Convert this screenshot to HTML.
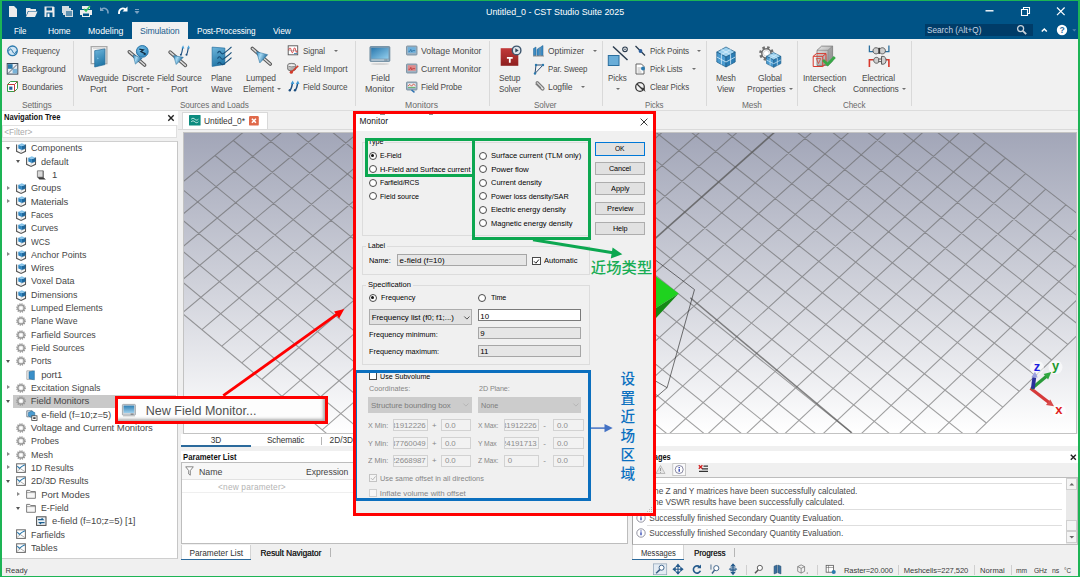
<!DOCTYPE html>
<html lang="en"><head><meta charset="utf-8"><title>Untitled_0 - CST Studio Suite 2025</title><style>
html,body{margin:0;padding:0}
body{width:1080px;height:577px;position:relative;overflow:hidden;background:#f0f0f0;font-family:"Liberation Sans","Noto Sans CJK SC",sans-serif}
.a{position:absolute;display:block}
svg.a{overflow:visible}
svg.cl{overflow:hidden}
.t{position:absolute;white-space:nowrap;line-height:1.2}
.cj{font-family:"Liberation Sans","Noto Sans CJK SC",sans-serif}
.dd{position:absolute;width:0;height:0;border-left:2.200px solid transparent;border-right:2.200px solid transparent;border-top:2.600px solid #6f6f6f}
.ex{position:absolute;width:0;height:0;border-left:2.600px solid transparent;border-right:2.600px solid transparent;border-top:3px solid #555}
.co{position:absolute;width:0;height:0;border-top:2.700px solid transparent;border-bottom:2.700px solid transparent;border-left:3.100px solid #8a8a8a}
.rd{position:absolute;width:8.200px;height:8.200px;border-radius:50%;border:.900px solid #4a4a4a;background:#fff;box-sizing:border-box}
.rd i{position:absolute;left:1.600px;top:1.600px;width:3px;height:3px;border-radius:50%;background:#111}
.di{border:1px solid #d2d2d2;background:#f2f2f2;box-sizing:border-box;overflow:hidden}
</style></head><body>
<div class="a" style="left:0px;top:0px;width:1080px;height:577px;background:#1db455;"></div>
<div class="a" style="left:1.6px;top:1px;width:1076.7px;height:574.7px;background:#f0f0f0;"></div>
<div class="a" style="left:1.6px;top:1px;width:1076.7px;height:38px;background:#005386;"></div>
<svg class="a" style="left:0px;top:0px" width="150" height="22" viewBox="0 0 150 22">
<g fill="#ececec" stroke="none">
<path d="M9 6h5l3 3v8H9z"/>
<path d="M26 8h4l1 1h5v2h-8l-2 5z" /><path d="M28.5 11.5h9l-2.5 5.5h-9z"/>
<path d="M44.5 6.5h9l1 1v9.5h-10z"/><rect x="46.5" y="7.5" width="5.5" height="3" fill="#005386"/><rect x="46.5" y="12.5" width="6" height="4.5" fill="#005386"/><rect x="47.5" y="13.5" width="2" height="3.5" fill="#fff"/>
<path d="M62 6h7v2h2v2h2v7h-8v-2h-2v-2h-1z" opacity=".9"/><rect x="66" y="11" width="6" height="5" fill="#005386" opacity=".55"/>
<path d="M82 6h8v3h-8z"/><path d="M80 10h12v5h-2v2h-8v-2h-2z"/><rect x="83" y="13.5" width="6" height="2.5" fill="#005386"/>
</g>
<path d="M84 9l2 2 4-5" stroke="#35c35a" stroke-width="1.6" fill="none"/>
<path d="M101.5 9.5c3-2.5 7-.5 6.5 4" stroke="#7fa5c4" stroke-width="1.5" fill="none"/><path d="M100 7v4h4z" fill="#7fa5c4"/>
<path d="M125.5 9.5c-3-2.5-7-.5-6.5 4.5" stroke="#fff" stroke-width="1.8" fill="none"/><path d="M127.5 6.5v5h-5z" fill="#fff"/>
<path d="M135 9.5h4M135.2 11.5l1.8 2 1.8-2z" stroke="#7fa5c4" stroke-width="1" fill="#7fa5c4"/>
</svg>
<span class="t" style="left:486.30px;top:6.73px;font-size:9.3px;color:#fff;transform:scaleX(0.9558);transform-origin:0 50%;">Untitled_0 - CST Studio Suite 2025</span>
<svg class="a" style="left:980px;top:2px" width="100" height="20" viewBox="0 0 100 20"><path d="M5.5 8.8h8" stroke="#fff" stroke-width="1.4"/>
<path d="M41.5 7.5h6v6h-6z M43.5 7.5v-2h6v6h-2" stroke="#fff" stroke-width="1.1" fill="none"/>
<path d="M77 5.5l7.6 7.6M84.6 5.5l-7.6 7.6" stroke="#fff" stroke-width="1.2"/></svg>
<span class="t" style="left:13.80px;top:25.15px;font-size:9.6px;color:#fff;transform:scaleX(0.8207);transform-origin:0 50%;letter-spacing:-0.12px;">File</span>
<span class="t" style="left:47.50px;top:25.15px;font-size:9.6px;color:#fff;transform:scaleX(0.8911);transform-origin:0 50%;letter-spacing:-0.12px;">Home</span>
<span class="t" style="left:87.50px;top:25.15px;font-size:9.6px;color:#fff;transform:scaleX(0.9112);transform-origin:0 50%;">Modeling</span>
<span class="t" style="left:197.00px;top:25.15px;font-size:9.6px;color:#fff;transform:scaleX(0.8575);transform-origin:0 50%;letter-spacing:-0.12px;">Post-Processing</span>
<span class="t" style="left:273.00px;top:25.15px;font-size:9.6px;color:#fff;transform:scaleX(0.8779);transform-origin:0 50%;letter-spacing:-0.12px;">View</span>
<div class="a" style="left:131.8px;top:22px;width:56.4px;height:17.5px;background:#f1f1f1;"></div>
<span class="t" style="left:140.00px;top:25.15px;font-size:9.6px;color:#1e5f8f;transform:scaleX(0.9030);transform-origin:0 50%;letter-spacing:-0.12px;">Simulation</span>
<div class="a" style="left:925.3px;top:24px;width:108px;height:11.8px;background:#003c68;"></div>
<span class="t" style="left:926.80px;top:25.34px;font-size:8.6px;color:#c6d6e4;transform:scaleX(0.9525);transform-origin:0 50%;">Search (Alt+Q)</span>
<svg class="a" style="left:1014px;top:23px" width="66" height="14" viewBox="0 0 66 14"><circle cx="6.6" cy="5.6" r="3" stroke="#c9d3db" stroke-width="1.3" fill="none"/><path d="M8.8 7.8l3.4 3.4" stroke="#c9d3db" stroke-width="1.8"/>
<path d="M27.8 8.6l2.5-2.6 2.5 2.6" stroke="#fff" stroke-width="1.5" fill="none"/>
<circle cx="48" cy="7" r="5.2" fill="#fff"/><text x="48" y="10.2" font-size="8.5" font-weight="bold" text-anchor="middle" fill="#2a6da3" font-family="Liberation Sans, sans-serif">?</text>
<path d="M58.3 6.3h4l-2 2.2z" fill="#4f86ad"/></svg>
<div class="a" style="left:1.6px;top:39px;width:1076.7px;height:71px;background:#f1f1f1;"></div>
<div class="a" style="left:1.6px;top:110px;width:1076.7px;height:1px;background:#dcdcdc;"></div>
<div class="a" style="left:73px;top:41px;width:1px;height:65px;background:#d9d9d9;"></div>
<div class="a" style="left:355.2px;top:41px;width:1px;height:65px;background:#d9d9d9;"></div>
<div class="a" style="left:489.2px;top:41px;width:1px;height:65px;background:#d9d9d9;"></div>
<div class="a" style="left:601.8px;top:41px;width:1px;height:65px;background:#d9d9d9;"></div>
<div class="a" style="left:705.8px;top:41px;width:1px;height:65px;background:#d9d9d9;"></div>
<div class="a" style="left:797.2px;top:41px;width:1px;height:65px;background:#d9d9d9;"></div>
<div class="a" style="left:911.3px;top:41px;width:1px;height:65px;background:#d9d9d9;"></div>
<span class="t" style="left:22.00px;top:99.63px;font-size:9.3px;color:#6a6a6a;transform:scaleX(0.9095);transform-origin:0 50%;letter-spacing:-0.12px;">Settings</span>
<span class="t" style="left:179.50px;top:99.63px;font-size:9.3px;color:#6a6a6a;transform:scaleX(0.8795);transform-origin:0 50%;letter-spacing:-0.12px;">Sources and Loads</span>
<span class="t" style="left:405.30px;top:99.63px;font-size:9.3px;color:#6a6a6a;transform:scaleX(0.9254);transform-origin:0 50%;">Monitors</span>
<span class="t" style="left:533.75px;top:99.63px;font-size:9.3px;color:#6a6a6a;transform:scaleX(0.8734);transform-origin:0 50%;letter-spacing:-0.12px;">Solver</span>
<span class="t" style="left:644.55px;top:99.63px;font-size:9.3px;color:#6a6a6a;transform:scaleX(0.8510);transform-origin:0 50%;letter-spacing:-0.12px;">Picks</span>
<span class="t" style="left:741.80px;top:99.63px;font-size:9.3px;color:#6a6a6a;transform:scaleX(0.8936);transform-origin:0 50%;letter-spacing:-0.12px;">Mesh</span>
<span class="t" style="left:843.25px;top:99.63px;font-size:9.3px;color:#6a6a6a;transform:scaleX(0.8694);transform-origin:0 50%;letter-spacing:-0.12px;">Check</span>
<span class="t" style="left:21.80px;top:46.03px;font-size:9.3px;color:#4a4a4a;transform:scaleX(0.8795);transform-origin:0 50%;letter-spacing:-0.12px;">Frequency</span>
<span class="t" style="left:21.80px;top:64.03px;font-size:9.3px;color:#4a4a4a;transform:scaleX(0.9021);transform-origin:0 50%;letter-spacing:-0.12px;">Background</span>
<span class="t" style="left:21.80px;top:82.23px;font-size:9.3px;color:#4a4a4a;transform:scaleX(0.8875);transform-origin:0 50%;letter-spacing:-0.12px;">Boundaries</span>
<span class="t" style="left:302.50px;top:46.03px;font-size:9.3px;color:#4a4a4a;transform:scaleX(0.8712);transform-origin:0 50%;letter-spacing:-0.12px;">Signal</span>
<span class="t" style="left:302.50px;top:64.03px;font-size:9.3px;color:#4a4a4a;transform:scaleX(0.9063);transform-origin:0 50%;">Field Import</span>
<span class="t" style="left:302.50px;top:82.23px;font-size:9.3px;color:#4a4a4a;transform:scaleX(0.8744);transform-origin:0 50%;letter-spacing:-0.12px;">Field Source</span>
<span class="t" style="left:420.80px;top:46.03px;font-size:9.3px;color:#4a4a4a;transform:scaleX(0.9362);transform-origin:0 50%;">Voltage Monitor</span>
<span class="t" style="left:420.80px;top:64.03px;font-size:9.3px;color:#4a4a4a;transform:scaleX(0.9318);transform-origin:0 50%;">Current Monitor</span>
<span class="t" style="left:420.80px;top:82.23px;font-size:9.3px;color:#4a4a4a;transform:scaleX(0.8887);transform-origin:0 50%;letter-spacing:-0.12px;">Field Probe</span>
<span class="t" style="left:548.00px;top:46.03px;font-size:9.3px;color:#4a4a4a;transform:scaleX(0.9098);transform-origin:0 50%;">Optimizer</span>
<span class="t" style="left:548.00px;top:64.03px;font-size:9.3px;color:#4a4a4a;transform:scaleX(0.8497);transform-origin:0 50%;letter-spacing:-0.12px;">Par. Sweep</span>
<span class="t" style="left:548.00px;top:82.23px;font-size:9.3px;color:#4a4a4a;transform:scaleX(0.9181);transform-origin:0 50%;letter-spacing:-0.12px;">Logfile</span>
<span class="t" style="left:649.50px;top:46.03px;font-size:9.3px;color:#4a4a4a;transform:scaleX(0.8750);transform-origin:0 50%;letter-spacing:-0.12px;">Pick Points</span>
<span class="t" style="left:649.50px;top:64.03px;font-size:9.3px;color:#4a4a4a;transform:scaleX(0.8509);transform-origin:0 50%;letter-spacing:-0.12px;">Pick Lists</span>
<span class="t" style="left:649.50px;top:82.23px;font-size:9.3px;color:#4a4a4a;transform:scaleX(0.8554);transform-origin:0 50%;letter-spacing:-0.12px;">Clear Picks</span>
<span class="t" style="left:77.90px;top:72.73px;font-size:9.3px;color:#4a4a4a;transform:scaleX(0.9022);transform-origin:0 50%;letter-spacing:-0.12px;">Waveguide</span>
<span class="t" style="left:90.05px;top:83.83px;font-size:9.3px;color:#4a4a4a;letter-spacing:-0.186px;">Port</span>
<span class="t" style="left:121.75px;top:72.73px;font-size:9.3px;color:#4a4a4a;transform:scaleX(0.9528);transform-origin:0 50%;">Discrete</span>
<span class="t" style="left:126.75px;top:83.83px;font-size:9.3px;color:#4a4a4a;letter-spacing:-0.186px;">Port</span>
<div class="dd" style="left:146.4px;top:88.2px"></div>
<span class="t" style="left:156.90px;top:72.73px;font-size:9.3px;color:#4a4a4a;transform:scaleX(0.8803);transform-origin:0 50%;letter-spacing:-0.12px;">Field Source</span>
<span class="t" style="left:171.05px;top:83.83px;font-size:9.3px;color:#4a4a4a;letter-spacing:-0.186px;">Port</span>
<span class="t" style="left:211.05px;top:72.73px;font-size:9.3px;color:#4a4a4a;transform:scaleX(0.8796);transform-origin:0 50%;letter-spacing:-0.12px;">Plane</span>
<span class="t" style="left:210.55px;top:83.83px;font-size:9.3px;color:#4a4a4a;transform:scaleX(0.9177);transform-origin:0 50%;">Wave</span>
<span class="t" style="left:246.30px;top:72.73px;font-size:9.3px;color:#4a4a4a;transform:scaleX(0.9088);transform-origin:0 50%;letter-spacing:-0.12px;">Lumped</span>
<span class="t" style="left:242.80px;top:83.83px;font-size:9.3px;color:#4a4a4a;transform:scaleX(0.9086);transform-origin:0 50%;">Element</span>
<div class="dd" style="left:277.0px;top:88.2px"></div>
<span class="t" style="left:370.50px;top:72.73px;font-size:9.3px;color:#4a4a4a;transform:scaleX(0.9425);transform-origin:0 50%;">Field</span>
<span class="t" style="left:365.25px;top:83.83px;font-size:9.3px;color:#4a4a4a;transform:scaleX(0.9512);transform-origin:0 50%;">Monitor</span>
<span class="t" style="left:499.25px;top:72.73px;font-size:9.3px;color:#4a4a4a;transform:scaleX(0.9024);transform-origin:0 50%;letter-spacing:-0.12px;">Setup</span>
<span class="t" style="left:499.00px;top:83.83px;font-size:9.3px;color:#4a4a4a;transform:scaleX(0.8540);transform-origin:0 50%;letter-spacing:-0.12px;">Solver</span>
<span class="t" style="left:608.10px;top:72.73px;font-size:9.3px;color:#4a4a4a;transform:scaleX(0.8648);transform-origin:0 50%;letter-spacing:-0.12px;">Picks</span>
<div class="dd" style="left:615.5px;top:88.2px"></div>
<span class="t" style="left:716.00px;top:72.73px;font-size:9.3px;color:#4a4a4a;transform:scaleX(0.8936);transform-origin:0 50%;letter-spacing:-0.12px;">Mesh</span>
<span class="t" style="left:717.25px;top:83.83px;font-size:9.3px;color:#4a4a4a;transform:scaleX(0.8915);transform-origin:0 50%;letter-spacing:-0.12px;">View</span>
<span class="t" style="left:757.50px;top:72.73px;font-size:9.3px;color:#4a4a4a;transform:scaleX(0.9131);transform-origin:0 50%;letter-spacing:-0.12px;">Global</span>
<span class="t" style="left:747.25px;top:83.83px;font-size:9.3px;color:#4a4a4a;transform:scaleX(0.9083);transform-origin:0 50%;">Properties</span>
<div class="dd" style="left:789.0px;top:88.2px"></div>
<span class="t" style="left:802.65px;top:72.73px;font-size:9.3px;color:#4a4a4a;transform:scaleX(0.9006);transform-origin:0 50%;">Intersection</span>
<span class="t" style="left:813.05px;top:83.83px;font-size:9.3px;color:#4a4a4a;transform:scaleX(0.8694);transform-origin:0 50%;letter-spacing:-0.12px;">Check</span>
<span class="t" style="left:862.30px;top:72.73px;font-size:9.3px;color:#4a4a4a;transform:scaleX(0.9005);transform-origin:0 50%;letter-spacing:-0.12px;">Electrical</span>
<span class="t" style="left:852.90px;top:83.83px;font-size:9.3px;color:#4a4a4a;transform:scaleX(0.9069);transform-origin:0 50%;letter-spacing:-0.12px;">Connections</span>
<div class="dd" style="left:901.9px;top:88.2px"></div>
<div class="dd" style="left:333.5px;top:49.8px"></div>
<div class="dd" style="left:593px;top:49.8px"></div>
<div class="dd" style="left:581px;top:86px"></div>
<div class="dd" style="left:697.3px;top:49.8px"></div>
<div class="dd" style="left:691.5px;top:67.8px"></div>
<svg class="a" style="left:0px;top:0px" width="1080" height="111" viewBox="0 0 1080 111">
<defs>
<linearGradient id="gb" x1="0" y1="0" x2="1" y2="1"><stop offset="0" stop-color="#7cc0e6"/><stop offset="1" stop-color="#1f74a8"/></linearGradient>
<linearGradient id="gscr" x1="0" y1="0" x2="0" y2="1"><stop offset="0" stop-color="#2d7fb5"/><stop offset="1" stop-color="#9fd0ec"/></linearGradient>
<linearGradient id="gred" x1="0" y1="0" x2="0" y2="1"><stop offset="0" stop-color="#c23a3a"/><stop offset="1" stop-color="#8e1f1f"/></linearGradient>
<linearGradient id="ggr" x1="0" y1="0" x2="1" y2="1"><stop offset="0" stop-color="#e8e8e8"/><stop offset="1" stop-color="#8f8f8f"/></linearGradient>
<linearGradient id="gdoor" x1="0" y1="0" x2="0.300" y2="1"><stop offset="0" stop-color="#6fb6dc"/><stop offset="1" stop-color="#2378a8"/></linearGradient>
<linearGradient id="gcone" x1="0" y1="0" x2="1" y2=".4"><stop offset="0" stop-color="#2f86bd"/><stop offset=".42" stop-color="#a6daf4"/><stop offset="1" stop-color="#155f92"/></linearGradient>
<radialGradient id="gball" cx=".4" cy=".35" r=".7"><stop offset="0" stop-color="#7cc3ea"/><stop offset="1" stop-color="#2f86bd"/></radialGradient>
<linearGradient id="gscr2" x1="0" y1="0" x2="1" y2="1"><stop offset="0" stop-color="#2a78ad"/><stop offset="1" stop-color="#93cfee"/></linearGradient>
</defs>
<!-- Settings small -->
<circle cx="12.5" cy="50.8" r="4.8" fill="#cfe4f3" stroke="#2b79ad" stroke-width="1.3"/><path d="M8.5 51.3c1.5-3 2.5-3 4 0s2.5 3 4-.3" stroke="#1f6ea3" stroke-width="1" fill="none"/>
<rect x="7.2" y="63.5" width="10.6" height="10.6" fill="#e9eef3" stroke="#3b4a5a" stroke-width="1"/><rect x="8" y="64.2" width="4.6" height="4.6" fill="#2b79ad"/><rect x="12.6" y="68.8" width="4.6" height="4.6" fill="#7ab3d8"/><path d="M8 73.5l9-9" stroke="#3b4a5a" stroke-width=".8"/>
<path d="M7.5 84.5l3-3h7v7l-3 3h-7z" fill="#fff" stroke="#3a9a46" stroke-width="1"/><path d="M7.5 84.5h7v7M14.5 84.5l3-3" stroke="#c43a3a" stroke-width="1" fill="none"/><rect x="9.2" y="86.6" width="3.2" height="3.2" fill="#2b5f9e"/>
<!-- Waveguide port -->
<path d="M91.200 46.600h15.700v17h-15.700z" fill="#f6f6f6" stroke="#a9a9a9" stroke-width="1.300"/><path d="M93 48.300h12.300v15.300" fill="none" stroke="#d2d2d2" stroke-width="1"/>
<path d="M94.700 50.700l10.200-1.800v15.700l-10.200 2.400z" fill="url(#gdoor)" stroke="#1d6797" stroke-width=".7"/><path d="M97.300 57.600l1.500.8-1.500.8z" fill="#8fd0f2"/>
<!-- Discrete port -->
<path d="M129.300 51.800l15.300 13.200" stroke="#585858" stroke-width="3.600" stroke-linecap="round"/><path d="M129.300 51.800l15.300 13.200" stroke="#dadada" stroke-width="1.500" stroke-linecap="round"/>
<path d="M133.200 54.800l9 3.500-6.800 5.800z" fill="url(#gcone)" stroke="#1d6797" stroke-width=".5"/>
<circle cx="142.300" cy="51.400" r="5.900" fill="url(#gball)" stroke="#1f6ea3" stroke-width=".9"/><path d="M139.300 49.200l4 .6-2.400 1.900 4.600 2.200" stroke="#0f2c42" stroke-width="1.300" fill="none"/><path d="M146 54.500l-2.600.4 1.300-2z" fill="#0f2c42"/>
<!-- Field source port -->
<path d="M170.100 52.100l15.300 13.300" stroke="#585858" stroke-width="3.600" stroke-linecap="round"/><path d="M170.100 52.100l15.300 13.300" stroke="#dadada" stroke-width="1.500" stroke-linecap="round"/>
<path d="M173.600 55.600l9.700 1.700-7.100 7.200z" fill="url(#gcone)" stroke="#1d6797" stroke-width=".5"/>
<path d="M181 54.500c1.300-1.800 1-4.500 1.900-7M186.600 54.500c1.300-1.800 1-4.500 1.900-7" stroke="#1d4f80" stroke-width="1.100" fill="none"/><circle cx="180.900" cy="54.800" r="1" fill="#1d4f80"/><circle cx="186.500" cy="54.800" r="1" fill="#1d4f80"/><path d="M181.500 48.200l1.600-3 1.300 3.200zM187.100 48.200l1.600-3 1.300 3.200z" fill="#4aa3dc"/>
<!-- Plane wave -->
<path d="M212.100 47.100l12.800 1v16.300l-12.800 2z" fill="url(#gdoor)" stroke="#1d6797" stroke-width=".6"/>
<path d="M217.500 53.200c1.400-2.300 2.200-2.300 3.300-.6s2.200 1.500 3.600.3 4.600-3.300 7.100-6M217.500 58.600c1.400-2.300 2.200-2.300 3.300-.6s2.200 1.500 3.600.3 4.600-3.300 7.100-6M217.500 64c1.400-2.300 2.200-2.300 3.300-.6s2.200 1.500 3.600.3 4.600-3.300 7.100-6" stroke="#174f7a" stroke-width="1.100" fill="none"/>
<!-- Lumped element -->
<path d="M252.400 48.500l17.800 15.500" stroke="#585858" stroke-width="3.600" stroke-linecap="round"/><path d="M252.400 48.500l17.800 15.500" stroke="#dadada" stroke-width="1.500" stroke-linecap="round"/>
<path d="M256.500 51.700l11.200 3-7.900 8.200z" fill="url(#gcone)" stroke="#1d6797" stroke-width=".5"/>
<!-- Sources small col -->
<rect x="288.200" y="45.800" width="9.500" height="9" fill="#fff" stroke="#555" stroke-width=".9"/><path d="M288.700 50.300c.8-3.200 1.800-3.200 2.500 0s1.600 3.200 2.300 0 1.500-3.200 2.200 0 .8 2 1.500.6" stroke="#d42a2a" stroke-width=".9" fill="none"/><path d="M288.700 50.600h8.600" stroke="#777" stroke-width=".4"/><path d="M294 53.500h3" stroke="#2b79ad" stroke-width=".8"/>
<path d="M287.700 65.200c0-2.400 8-2.400 8 0v3.800c0 2.400-8 2.400-8 0z" fill="url(#ggr)" stroke="#5a5a5a" stroke-width=".8"/><ellipse cx="291.700" cy="65.200" rx="4" ry="1.600" fill="#efefef" stroke="#5a5a5a" stroke-width=".6"/><path d="M291.600 72l6.600-6.100" stroke="#d23b2b" stroke-width="1.500"/><circle cx="291.300" cy="72.200" r="1.600" fill="#d23b2b"/>
<path d="M290 90c1.800-1.300 2-4.500 2.500-7.500M295.200 90c1.800-1.300 2-4.500 2.500-7.500" stroke="#1d4f80" stroke-width="1.500" fill="none"/><circle cx="289.800" cy="90.200" r="1.200" fill="#1d4f80"/><circle cx="295" cy="90.200" r="1.200" fill="#1d4f80"/><path d="M290.700 84l2-3.400 1.600 3.500zM295.900 84l2-3.400 1.600 3.500z" fill="#3f9bd8"/>
<!-- Field monitor big -->
<ellipse cx="380" cy="64" rx="9" ry="1.100" fill="#d4d4d4"/><rect x="369.900" y="46.500" width="20" height="15" rx="1" fill="#7b99b0" stroke="#5f7f97" stroke-width=".7"/><rect x="371.300" y="47.900" width="17.200" height="10.700" fill="url(#gscr2)"/><rect x="371.300" y="59.300" width="17.200" height="1.500" fill="#b9cad6"/><rect x="384.500" y="59.600" width="1.100" height=".9" fill="#44596a"/><rect x="386.300" y="59.600" width="1.100" height=".9" fill="#44596a"/>
<!-- monitors small -->
<rect x="406.500" y="46" width="10.500" height="9" rx=".8" fill="#9fb4c4" stroke="#6f8798" stroke-width=".8"/><rect x="407.800" y="47.200" width="7.900" height="5.600" fill="#6fb1dc"/><path d="M408.500 51.300h1.500l.8-2 1 2.600.8-1.300h2.500" stroke="#1f5f8f" stroke-width=".6" fill="none"/>
<rect x="406.500" y="64" width="10.500" height="9" rx=".8" fill="#9fb4c4" stroke="#6f8798" stroke-width=".8"/><rect x="407.800" y="65.200" width="7.900" height="5.600" fill="#e08a8a"/><path d="M408.500 69.300h1.500l.8-2 1 2.600.8-1.300h2.500" stroke="#b02020" stroke-width=".6" fill="none"/>
<rect x="406.500" y="82" width="10.500" height="8" rx=".8" fill="#9fb4c4" stroke="#6f8798" stroke-width=".8"/><rect x="407.800" y="83.200" width="7.900" height="4.800" fill="#e9ecee"/><path d="M408 86l1.800-1.600 1.800 1.800 1.800-2.200 2 1.500" stroke="#d23b2b" stroke-width=".8" fill="none"/><path d="M408 87.400h7.500" stroke="#3a9a46" stroke-width=".8"/><path d="M411.500 90l3 2.300" stroke="#2b6fb0" stroke-width="1.500"/>
<!-- Setup solver -->
<rect x="500.700" y="48.200" width="17.600" height="17.600" fill="url(#gred)"/><path d="M506.900 57h5.800v1.700h-2v4.100h-1.800v-4.100h-2z" fill="#fff"/>
<circle cx="516.600" cy="50.400" r="4.300" fill="#dfe6ec" stroke="#3d566e" stroke-width="1.400"/><path d="M515.300 48.300v4.200l3.400-2.100z" fill="#2f465c"/>
<!-- solver small -->
<path d="M533.500 55.500v-7l2.500-1.500v8.500zM537 55.500v-6l2.500-2v8zM540.500 55.500v-8.500l2.500-1.500v10z" fill="#3d8cc4" stroke="#1f5f8f" stroke-width=".5"/><path d="M533 56h11" stroke="#777" stroke-width=".8"/>
<path d="M535 73.500l8-8.500M535 73.500l1-8.500h7" stroke="#2b4d73" stroke-width="1" fill="none"/><circle cx="535" cy="73.500" r="1.200" fill="#2b79ad"/><circle cx="536" cy="65" r="1.200" fill="#2b79ad"/><circle cx="543" cy="65" r="1.200" fill="#2b79ad"/>
<path d="M535.500 83.500l6 6c1.500 1.500 3.500-.5 2-2l-5.500-5.500c-1-1-2.500.2-1.500 1.300l4.500 4.500" stroke="#7d7d7d" stroke-width="1.200" fill="none"/>
<!-- Picks big -->
<rect x="608.300" y="55.500" width="10.700" height="10" fill="#69add8" stroke="#2b6f9f" stroke-width="1"/><path d="M613 46.500l14.500 13.500" stroke="#2a3b4d" stroke-width="1.500"/><circle cx="625" cy="49.300" r="2.300" fill="#fff" stroke="#2a3b4d" stroke-width="1.100"/><circle cx="625" cy="49.300" r=".8" fill="#2a3b4d"/>
<!-- picks small -->
<path d="M635.500 46l9.500 9.500" stroke="#2a3b4d" stroke-width="1.300"/><circle cx="640.500" cy="51" r="1.900" fill="#2b5f9e"/>
<path d="M636 64h5.500l2.500 2.500v7.500h-8z" fill="#fff" stroke="#555" stroke-width=".9"/><path d="M637.500 68h4M637.500 70h3M637.500 72h4" stroke="#888" stroke-width=".6"/><circle cx="643" cy="68.500" r="2" fill="#2b79ad"/>
<circle cx="640" cy="87" r="4.300" fill="none" stroke="#3a3a3a" stroke-width="1.300"/><path d="M637 84l6 6" stroke="#3a3a3a" stroke-width="1.200"/><path d="M641 87.500l4.500 4.500-1.200-4z" fill="#3a3a3a"/>
<!-- Mesh view -->
<g stroke="#1a5a86" stroke-width=".7"><path d="M716.800 52l9.200-5 9.200 5-9.200 5z" fill="#9fd3f0"/><path d="M716.800 52v10l9.200 5v-10z" fill="#4a9bd0"/><path d="M735.200 52v10l-9.200 5v-10z" fill="#2b7db5"/>
<path d="M721.400 49.500l9.200 5M730.600 49.500l-9.200 5M716.800 57l9.200 5 9.200-5M721.400 54.500v10M730.600 54.500v10" fill="none" stroke="#d9effb" stroke-width=".8"/></g>
<!-- Global properties -->
<circle cx="766.400" cy="53.400" r="5.700" fill="none" stroke="#6f6f6f" stroke-width="3.200" stroke-dasharray="2.300 2.180"/><circle cx="766.400" cy="53.400" r="4.600" fill="#fff" stroke="#6f6f6f" stroke-width="1.500"/><circle cx="766.400" cy="53.400" r="2.900" fill="#fff" stroke="#a8a8a8" stroke-width=".5"/>
<g stroke="#1a5a86" stroke-width=".6"><path d="M766.500 56.300l7.200-3.700 7.200 3.700-7.200 3.700z" fill="#9fd3f0"/><path d="M766.500 56.300v7.300l7.200 3.700v-7.300z" fill="#4a9bd0"/><path d="M780.900 56.300v7.300l-7.200 3.700v-7.300z" fill="#2b7db5"/><path d="M770.100 54.500l7.200 3.700M777.300 54.500l-7.200 3.700M766.500 60l7.200 3.700 7.200-3.700M770.100 58.200v7.300M777.300 58.200v7.300" fill="none" stroke="#d3ebf8" stroke-width=".7"/></g>
<!-- Intersection check -->
<path d="M817 50.300l4.600-4.200h11v15l-4.600 4.400h-11z" fill="url(#ggr)" stroke="#6e6e6e" stroke-width=".7"/><path d="M817 50.300h11v15.200M828 50.300l4.600-4.200" stroke="#7a7a7a" stroke-width=".6" fill="none"/><path d="M828 50.300l4.600-4.200v15l-4.600 4.400z" fill="#8c8c8c" opacity=".55"/>
<path d="M813.200 56.300l3.200-2.700h9.600v10l-3.200 2.900h-9.600zM813.200 56.300h9.600v10.200M822.800 56.300l3.200-2.700" fill="none" stroke="#d8382c" stroke-width="1"/><path d="M816.300 58.500l2.200 5 2.200-5z" stroke="#d8382c" stroke-width=".7" fill="none"/>
<path d="M823 60l4.600 4.500 7.200-7.500" stroke="#38a847" stroke-width="2.800" fill="none"/>
<!-- Electrical connections -->
<path d="M869.400 45.400v6.300h4.200M888.900 45.400v6.300h-4.200" stroke="#2b6f9f" stroke-width="1.300" fill="none"/><path d="M869.400 67v-7.200h4.200M888.900 67v-7.200h-4.200" stroke="#d8382c" stroke-width="1.600" fill="none"/>
<path d="M873 50.800c0-3.200 3.800-3.800 5.200-2.200h2c1.400-1.600 5.200-1 5.200 2.200s-3.800 3.800-5.200 2.200h-2c-1.400 1.600-5.200 1-5.200-2.200z" fill="#cfcfcf" stroke="#4f4f4f" stroke-width=".9"/><path d="M879.200 47.800v6" stroke="#3a3a3a" stroke-width="1.800"/>
<path d="M873.700 60.300c0-3.200 3.600-3.700 5-1.900v3.800c-1.400 1.800-5 1.300-5-1.900z" fill="#cfcfcf" stroke="#4f4f4f" stroke-width=".9"/><path d="M881.500 56.400h1.700c3.800 0 3.800 7.800 0 7.800h-1.700z" fill="#cfcfcf" stroke="#4f4f4f" stroke-width=".9"/><path d="M878.700 59h2.800M878.700 61.600h2.800" stroke="#4f4f4f" stroke-width=".9"/>
</svg>
<div class="a" style="left:2px;top:111px;width:176px;height:14px;background:#ffffff;"></div>
<span class="t" style="left:4.20px;top:112.62px;font-size:8.3px;color:#111;transform:scaleX(0.9141);transform-origin:0 50%;font-weight:bold;">Navigation Tree</span>
<svg class="a" style="left:166px;top:113px" width="10" height="10" viewBox="0 0 10 10"><path d="M2.300 2.300l5.400 5.400M7.700 2.300l-5.400 5.400" stroke="#222" stroke-width="1.400"/></svg>
<div class="a" style="left:2px;top:124.8px;width:175.3px;height:13.5px;background:#ffffff;border:1px solid #e0e0e0;box-sizing:border-box;"></div>
<span class="t" style="left:4.20px;top:127.82px;font-size:8.3px;color:#a9a9a9;">&lt;Filter&gt;</span>
<div class="a" style="left:2px;top:140.8px;width:175.6px;height:418.7px;background:#ffffff;border:1px solid #cfcfcf;border-left:none;border-right:1.500px solid #c6c6c6;box-sizing:border-box;"></div>
<div class="a" style="left:12.9px;top:395px;width:163.5px;height:12.8px;background:#c9c9c9;"></div>
<div class="ex" style="left:5.8px;top:147.1px"></div>
<svg class="a" style="left:15.5px;top:143.1px" width="10.6" height="11" viewBox="0 0 10.6 11"><path d="M.6 1.500v6.800l4.500 2.200 4.400-2.200v-6.800" fill="#fbfbfb" stroke="#555" stroke-width="1.100"/><path d="M5.100 10.300v-2.600l4.300-2" stroke="#b5b5b5" stroke-width=".6" fill="none"/><path d="M2.300 1.700l3.600 1.400v3.900l-3.600-1.400z" fill="#2f86c2"/><path d="M5.900 3.100l3.600-1.400v3.900l-3.600 1.400z" fill="#1d679c"/><path d="M2.300 1.700l3.500-1.400 3.700 1.400-3.600 1.400z" fill="#86c4ea"/></svg>
<span class="t" style="left:30.80px;top:142.26px;font-size:9.5px;color:#474747;transform:scaleX(0.9542);transform-origin:0 50%;">Components</span>
<div class="ex" style="left:16.2px;top:160.4px"></div>
<svg class="a" style="left:25.9px;top:156.4px" width="10.6" height="11" viewBox="0 0 10.6 11"><path d="M.6 1.500v6.800l4.500 2.200 4.400-2.200v-6.800" fill="#fbfbfb" stroke="#555" stroke-width="1.100"/><path d="M5.100 10.300v-2.600l4.300-2" stroke="#b5b5b5" stroke-width=".6" fill="none"/><path d="M2.300 1.700l3.600 1.400v3.900l-3.600-1.400z" fill="#2f86c2"/><path d="M5.900 3.100l3.600-1.400v3.900l-3.600 1.400z" fill="#1d679c"/><path d="M2.300 1.700l3.500-1.400 3.700 1.400-3.600 1.400z" fill="#86c4ea"/></svg>
<span class="t" style="left:41.20px;top:155.58px;font-size:9.5px;color:#474747;transform:scaleX(0.9641);transform-origin:0 50%;">default</span>
<svg class="a" style="left:36.3px;top:169.7px" width="10.6" height="11" viewBox="0 0 10.6 11"><path d="M1.400 .8h5.800v6.400h-5.800z" fill="#d9d9d9" stroke="#6e6e6e" stroke-width=".8"/><path d="M1.400 7.200l2 2.300h6l-2.200-2.300z" fill="#3b3b3b"/><path d="M7.200 .8v6.400l2.200 2.300" stroke="#555" stroke-width=".7" fill="none"/></svg>
<span class="t" style="left:52.00px;top:168.90px;font-size:9.5px;color:#474747;">1</span>
<div class="co" style="left:6.9px;top:185.6px"></div>
<svg class="a" style="left:15.5px;top:183.0px" width="10.6" height="11" viewBox="0 0 10.6 11"><path d="M.6 1.500v6.800l4.500 2.200 4.400-2.200v-6.800" fill="#fbfbfb" stroke="#555" stroke-width="1.100"/><path d="M5.100 10.300v-2.600l4.300-2" stroke="#b5b5b5" stroke-width=".6" fill="none"/><path d="M2.300 1.700l3.600 1.400v3.900l-3.600-1.400z" fill="#2f86c2"/><path d="M5.900 3.100l3.600-1.400v3.900l-3.600 1.400z" fill="#1d679c"/><path d="M2.300 1.700l3.500-1.400 3.700 1.400-3.600 1.400z" fill="#86c4ea"/></svg>
<span class="t" style="left:30.80px;top:182.23px;font-size:9.5px;color:#474747;transform:scaleX(0.9630);transform-origin:0 50%;">Groups</span>
<div class="co" style="left:6.9px;top:198.9px"></div>
<svg class="a" style="left:15.5px;top:196.3px" width="10.6" height="11" viewBox="0 0 10.6 11"><path d="M.6 1.500v6.800l4.500 2.200 4.400-2.200v-6.800" fill="#fbfbfb" stroke="#555" stroke-width="1.100"/><path d="M5.100 10.300v-2.600l4.300-2" stroke="#b5b5b5" stroke-width=".6" fill="none"/><path d="M2.300 1.700l3.600 1.400v3.900l-3.600-1.400z" fill="#2f86c2"/><path d="M5.900 3.100l3.600-1.400v3.900l-3.600 1.400z" fill="#1d679c"/><path d="M2.300 1.700l3.500-1.400 3.700 1.400-3.600 1.400z" fill="#86c4ea"/></svg>
<span class="t" style="left:30.80px;top:195.55px;font-size:9.5px;color:#474747;letter-spacing:-0.130px;">Materials</span>
<svg class="a" style="left:15.5px;top:209.7px" width="10.6" height="11" viewBox="0 0 10.6 11"><path d="M.6 1.500v6.800l4.500 2.200 4.400-2.200v-6.800" fill="#fbfbfb" stroke="#555" stroke-width="1.100"/><path d="M5.100 10.300v-2.600l4.300-2" stroke="#b5b5b5" stroke-width=".6" fill="none"/><path d="M2.300 1.700l3.600 1.400v3.900l-3.600-1.400z" fill="#2f86c2"/><path d="M5.900 3.100l3.600-1.400v3.900l-3.600 1.400z" fill="#1d679c"/><path d="M2.300 1.700l3.500-1.400 3.700 1.400-3.600 1.400z" fill="#86c4ea"/></svg>
<span class="t" style="left:30.80px;top:208.87px;font-size:9.5px;color:#474747;transform:scaleX(0.8665);transform-origin:0 50%;letter-spacing:-0.12px;">Faces</span>
<svg class="a" style="left:15.5px;top:223.0px" width="10.6" height="11" viewBox="0 0 10.6 11"><path d="M.6 1.500v6.800l4.500 2.200 4.400-2.200v-6.800" fill="#fbfbfb" stroke="#555" stroke-width="1.100"/><path d="M5.100 10.300v-2.600l4.300-2" stroke="#b5b5b5" stroke-width=".6" fill="none"/><path d="M2.300 1.700l3.600 1.400v3.900l-3.600-1.400z" fill="#2f86c2"/><path d="M5.900 3.100l3.600-1.400v3.900l-3.600 1.400z" fill="#1d679c"/><path d="M2.300 1.700l3.500-1.400 3.700 1.400-3.600 1.400z" fill="#86c4ea"/></svg>
<span class="t" style="left:30.80px;top:222.19px;font-size:9.5px;color:#474747;transform:scaleX(0.9155);transform-origin:0 50%;letter-spacing:-0.12px;">Curves</span>
<svg class="a" style="left:15.5px;top:236.3px" width="10.6" height="11" viewBox="0 0 10.6 11"><path d="M.6 1.500v6.800l4.500 2.200 4.400-2.200v-6.800" fill="#fbfbfb" stroke="#555" stroke-width="1.100"/><path d="M5.100 10.300v-2.600l4.300-2" stroke="#b5b5b5" stroke-width=".6" fill="none"/><path d="M2.300 1.700l3.600 1.400v3.900l-3.600-1.400z" fill="#2f86c2"/><path d="M5.900 3.100l3.600-1.400v3.900l-3.600 1.400z" fill="#1d679c"/><path d="M2.300 1.700l3.500-1.400 3.700 1.400-3.600 1.400z" fill="#86c4ea"/></svg>
<span class="t" style="left:30.80px;top:235.51px;font-size:9.5px;color:#474747;transform:scaleX(0.8666);transform-origin:0 50%;letter-spacing:-0.12px;">WCS</span>
<div class="co" style="left:6.9px;top:252.2px"></div>
<svg class="a" style="left:15.5px;top:249.6px" width="10.6" height="11" viewBox="0 0 10.6 11"><path d="M.6 1.500v6.800l4.500 2.200 4.400-2.200v-6.800" fill="#fbfbfb" stroke="#555" stroke-width="1.100"/><path d="M5.100 10.300v-2.600l4.300-2" stroke="#b5b5b5" stroke-width=".6" fill="none"/><path d="M2.300 1.700l3.600 1.400v3.900l-3.600-1.400z" fill="#2f86c2"/><path d="M5.900 3.100l3.600-1.400v3.900l-3.600 1.400z" fill="#1d679c"/><path d="M2.300 1.700l3.500-1.400 3.700 1.400-3.600 1.400z" fill="#86c4ea"/></svg>
<span class="t" style="left:30.80px;top:248.84px;font-size:9.5px;color:#474747;transform:scaleX(0.9384);transform-origin:0 50%;">Anchor Points</span>
<svg class="a" style="left:15.5px;top:262.9px" width="10.6" height="11" viewBox="0 0 10.6 11"><path d="M.6 1.500v6.800l4.500 2.200 4.400-2.200v-6.800" fill="#fbfbfb" stroke="#555" stroke-width="1.100"/><path d="M5.100 10.300v-2.600l4.300-2" stroke="#b5b5b5" stroke-width=".6" fill="none"/><path d="M2.300 1.700l3.600 1.400v3.900l-3.600-1.400z" fill="#2f86c2"/><path d="M5.900 3.100l3.600-1.400v3.900l-3.600 1.400z" fill="#1d679c"/><path d="M2.300 1.700l3.500-1.400 3.700 1.400-3.600 1.400z" fill="#86c4ea"/></svg>
<span class="t" style="left:30.80px;top:262.16px;font-size:9.5px;color:#474747;transform:scaleX(0.9475);transform-origin:0 50%;">Wires</span>
<svg class="a" style="left:15.5px;top:276.3px" width="10.6" height="11" viewBox="0 0 10.6 11"><path d="M.6 1.500v6.800l4.500 2.200 4.400-2.200v-6.800" fill="#fbfbfb" stroke="#555" stroke-width="1.100"/><path d="M5.100 10.300v-2.600l4.300-2" stroke="#b5b5b5" stroke-width=".6" fill="none"/><path d="M2.300 1.700l3.600 1.400v3.900l-3.600-1.400z" fill="#2f86c2"/><path d="M5.900 3.100l3.600-1.400v3.900l-3.600 1.400z" fill="#1d679c"/><path d="M2.300 1.700l3.500-1.400 3.700 1.400-3.600 1.400z" fill="#86c4ea"/></svg>
<span class="t" style="left:30.80px;top:275.48px;font-size:9.5px;color:#474747;transform:scaleX(0.9467);transform-origin:0 50%;">Voxel Data</span>
<svg class="a" style="left:15.5px;top:289.6px" width="10.6" height="11" viewBox="0 0 10.6 11"><path d="M.6 1.500v6.800l4.500 2.200 4.400-2.200v-6.800" fill="#fbfbfb" stroke="#555" stroke-width="1.100"/><path d="M5.100 10.300v-2.600l4.300-2" stroke="#b5b5b5" stroke-width=".6" fill="none"/><path d="M2.300 1.700l3.600 1.400v3.900l-3.600-1.400z" fill="#2f86c2"/><path d="M5.900 3.100l3.600-1.400v3.900l-3.600 1.400z" fill="#1d679c"/><path d="M2.300 1.700l3.500-1.400 3.700 1.400-3.600 1.400z" fill="#86c4ea"/></svg>
<span class="t" style="left:30.80px;top:288.80px;font-size:9.5px;color:#474747;transform:scaleX(0.9369);transform-origin:0 50%;">Dimensions</span>
<svg class="a" style="left:15.5px;top:302.9px" width="10.6" height="11" viewBox="0 0 10.6 11"><circle cx="5" cy="5" r="4" fill="none" stroke="#949494" stroke-width="1.700" stroke-dasharray="1.050 1.044"/><circle cx="5" cy="5" r="3.100" fill="#fff" stroke="#9a9a9a" stroke-width="1.500"/><circle cx="5" cy="5" r="2" fill="#fff" stroke="#c4c4c4" stroke-width=".5"/></svg>
<span class="t" style="left:30.80px;top:302.12px;font-size:9.5px;color:#474747;transform:scaleX(0.9364);transform-origin:0 50%;">Lumped Elements</span>
<svg class="a" style="left:15.5px;top:316.2px" width="10.6" height="11" viewBox="0 0 10.6 11"><circle cx="5" cy="5" r="4" fill="none" stroke="#949494" stroke-width="1.700" stroke-dasharray="1.050 1.044"/><circle cx="5" cy="5" r="3.100" fill="#fff" stroke="#9a9a9a" stroke-width="1.500"/><circle cx="5" cy="5" r="2" fill="#fff" stroke="#c4c4c4" stroke-width=".5"/></svg>
<span class="t" style="left:30.80px;top:315.45px;font-size:9.5px;color:#474747;transform:scaleX(0.9141);transform-origin:0 50%;">Plane Wave</span>
<svg class="a" style="left:15.5px;top:329.6px" width="10.6" height="11" viewBox="0 0 10.6 11"><circle cx="5" cy="5" r="4" fill="none" stroke="#949494" stroke-width="1.700" stroke-dasharray="1.050 1.044"/><circle cx="5" cy="5" r="3.100" fill="#fff" stroke="#9a9a9a" stroke-width="1.500"/><circle cx="5" cy="5" r="2" fill="#fff" stroke="#c4c4c4" stroke-width=".5"/></svg>
<span class="t" style="left:30.80px;top:328.77px;font-size:9.5px;color:#474747;transform:scaleX(0.9368);transform-origin:0 50%;">Farfield Sources</span>
<svg class="a" style="left:15.5px;top:342.9px" width="10.6" height="11" viewBox="0 0 10.6 11"><circle cx="5" cy="5" r="4" fill="none" stroke="#949494" stroke-width="1.700" stroke-dasharray="1.050 1.044"/><circle cx="5" cy="5" r="3.100" fill="#fff" stroke="#9a9a9a" stroke-width="1.500"/><circle cx="5" cy="5" r="2" fill="#fff" stroke="#c4c4c4" stroke-width=".5"/></svg>
<span class="t" style="left:30.80px;top:342.09px;font-size:9.5px;color:#474747;transform:scaleX(0.9211);transform-origin:0 50%;">Field Sources</span>
<div class="ex" style="left:5.8px;top:360.2px"></div>
<svg class="a" style="left:15.5px;top:356.2px" width="10.6" height="11" viewBox="0 0 10.6 11"><circle cx="5" cy="5" r="4" fill="none" stroke="#949494" stroke-width="1.700" stroke-dasharray="1.050 1.044"/><circle cx="5" cy="5" r="3.100" fill="#fff" stroke="#9a9a9a" stroke-width="1.500"/><circle cx="5" cy="5" r="2" fill="#fff" stroke="#c4c4c4" stroke-width=".5"/></svg>
<span class="t" style="left:30.80px;top:355.41px;font-size:9.5px;color:#474747;transform:scaleX(0.9245);transform-origin:0 50%;">Ports</span>
<svg class="a" style="left:25.9px;top:369.5px" width="10.6" height="11" viewBox="0 0 10.6 11"><path d="M.8 .8h6.400v8.600h-6.400z" fill="#ededed" stroke="#9a9a9a" stroke-width=".7"/><path d="M3 1.800l5.400-1v9l-5.400-1z" fill="#3a8fc8" stroke="#1d6797" stroke-width=".5"/></svg>
<span class="t" style="left:41.20px;top:368.73px;font-size:9.5px;color:#474747;letter-spacing:-0.164px;">port1</span>
<div class="co" style="left:6.9px;top:385.4px"></div>
<svg class="a" style="left:15.5px;top:382.8px" width="10.6" height="11" viewBox="0 0 10.6 11"><circle cx="5" cy="5" r="4" fill="none" stroke="#949494" stroke-width="1.700" stroke-dasharray="1.050 1.044"/><circle cx="5" cy="5" r="3.100" fill="#fff" stroke="#9a9a9a" stroke-width="1.500"/><circle cx="5" cy="5" r="2" fill="#fff" stroke="#c4c4c4" stroke-width=".5"/></svg>
<span class="t" style="left:30.80px;top:382.06px;font-size:9.5px;color:#474747;transform:scaleX(0.9268);transform-origin:0 50%;">Excitation Signals</span>
<div class="ex" style="left:5.8px;top:400.2px"></div>
<svg class="a" style="left:15.5px;top:396.2px" width="10.6" height="11" viewBox="0 0 10.6 11"><circle cx="5" cy="5" r="4" fill="none" stroke="#949494" stroke-width="1.700" stroke-dasharray="1.050 1.044"/><circle cx="5" cy="5" r="3.100" fill="#fff" stroke="#9a9a9a" stroke-width="1.500"/><circle cx="5" cy="5" r="2" fill="#fff" stroke="#c4c4c4" stroke-width=".5"/></svg>
<span class="t" style="left:30.80px;top:395.38px;font-size:9.5px;color:#474747;letter-spacing:-0.089px;">Field Monitors</span>
<svg class="a" style="left:25.9px;top:409.5px" width="12" height="11" viewBox="0 0 12 11"><path d="M.8 .8h5.400v6h-5.400z" fill="#e8eef3" stroke="#5a6b7a" stroke-width=".8"/><path d="M2.400 2.600l3.200-1.500 3.200 1.500v3.400l-3.200 1.600-3.200-1.600z" fill="#4a9bd0" stroke="#1d6797" stroke-width=".5"/><rect x="5.800" y="5.800" width="5.200" height="4.600" fill="#fff" stroke="#444" stroke-width=".8"/><rect x="7.200" y="7.200" width="2.400" height="1.800" fill="#444"/></svg>
<span class="t" style="left:41.20px;top:408.70px;font-size:9.5px;color:#474747;letter-spacing:-0.107px;">e-field (f=10;z=5)</span>
<svg class="a" style="left:15.5px;top:422.8px" width="10.6" height="11" viewBox="0 0 10.6 11"><circle cx="5" cy="5" r="4" fill="none" stroke="#949494" stroke-width="1.700" stroke-dasharray="1.050 1.044"/><circle cx="5" cy="5" r="3.100" fill="#fff" stroke="#9a9a9a" stroke-width="1.500"/><circle cx="5" cy="5" r="2" fill="#fff" stroke="#c4c4c4" stroke-width=".5"/></svg>
<span class="t" style="left:30.80px;top:422.02px;font-size:9.5px;color:#474747;letter-spacing:-0.058px;">Voltage and Current Monitors</span>
<svg class="a" style="left:15.5px;top:436.1px" width="10.6" height="11" viewBox="0 0 10.6 11"><circle cx="5" cy="5" r="4" fill="none" stroke="#949494" stroke-width="1.700" stroke-dasharray="1.050 1.044"/><circle cx="5" cy="5" r="3.100" fill="#fff" stroke="#9a9a9a" stroke-width="1.500"/><circle cx="5" cy="5" r="2" fill="#fff" stroke="#c4c4c4" stroke-width=".5"/></svg>
<span class="t" style="left:30.80px;top:435.34px;font-size:9.5px;color:#474747;transform:scaleX(0.9302);transform-origin:0 50%;">Probes</span>
<div class="co" style="left:6.9px;top:452.1px"></div>
<svg class="a" style="left:15.5px;top:449.5px" width="10.6" height="11" viewBox="0 0 10.6 11"><circle cx="5" cy="5" r="4" fill="none" stroke="#949494" stroke-width="1.700" stroke-dasharray="1.050 1.044"/><circle cx="5" cy="5" r="3.100" fill="#fff" stroke="#9a9a9a" stroke-width="1.500"/><circle cx="5" cy="5" r="2" fill="#fff" stroke="#c4c4c4" stroke-width=".5"/></svg>
<span class="t" style="left:30.80px;top:448.67px;font-size:9.5px;color:#474747;transform:scaleX(0.9470);transform-origin:0 50%;">Mesh</span>
<div class="co" style="left:6.9px;top:465.4px"></div>
<svg class="a" style="left:15.5px;top:462.8px" width="10.6" height="11" viewBox="0 0 10.6 11"><rect x=".6" y=".8" width="8.800" height="8.600" fill="#fff" stroke="#6a6a6a" stroke-width="1"/><path d="M1.300 3.200l2.200 2.200 2-1.800 3.400-1.800" stroke="#2b79ad" stroke-width="1.100" fill="none"/><path d="M1.300 8.200l3-2.600 4.600 3" stroke="#8a8a8a" stroke-width=".7" fill="none"/></svg>
<span class="t" style="left:30.80px;top:461.99px;font-size:9.5px;color:#474747;transform:scaleX(0.9147);transform-origin:0 50%;">1D Results</span>
<div class="ex" style="left:5.8px;top:480.1px"></div>
<svg class="a" style="left:15.5px;top:476.1px" width="10.6" height="11" viewBox="0 0 10.6 11"><rect x=".6" y=".8" width="8.800" height="8.600" fill="#fff" stroke="#6a6a6a" stroke-width="1"/><path d="M1.300 3.200l2.200 2.200 2-1.800 3.400-1.800" stroke="#2b79ad" stroke-width="1.100" fill="none"/><path d="M1.300 8.200l3-2.600 4.600 3" stroke="#8a8a8a" stroke-width=".7" fill="none"/></svg>
<span class="t" style="left:30.80px;top:475.31px;font-size:9.5px;color:#474747;transform:scaleX(0.9388);transform-origin:0 50%;">2D/3D Results</span>
<div class="co" style="left:17.3px;top:492.0px"></div>
<svg class="a" style="left:25.9px;top:489.4px" width="10.6" height="11" viewBox="0 0 10.6 11"><path d="M.6 1.400h3.200l.9 1.100h4.700v6.800h-8.800z" fill="#f7f7f7" stroke="#707070" stroke-width=".9"/><path d="M.6 3.600h8.800" stroke="#707070" stroke-width=".6"/></svg>
<span class="t" style="left:41.20px;top:488.63px;font-size:9.5px;color:#474747;letter-spacing:-0.009px;">Port Modes</span>
<div class="ex" style="left:16.2px;top:506.7px"></div>
<svg class="a" style="left:25.9px;top:502.7px" width="10.6" height="11" viewBox="0 0 10.6 11"><path d="M.6 1.400h3.200l.9 1.100h4.700v6.800h-8.800z" fill="#f7f7f7" stroke="#707070" stroke-width=".9"/><path d="M.6 3.600h8.800" stroke="#707070" stroke-width=".6"/></svg>
<span class="t" style="left:41.20px;top:501.95px;font-size:9.5px;color:#474747;transform:scaleX(0.9138);transform-origin:0 50%;">E-Field</span>
<svg class="a" style="left:36.3px;top:516.1px" width="10.6" height="11" viewBox="0 0 10.6 11"><rect x=".6" y=".8" width="9.400" height="8.600" fill="#eef3f7" stroke="#4a4a4a" stroke-width="1"/><path d="M2 3.600h5l-1.400-1.400M8.600 6.600h-5l1.400 1.400" stroke="#1d5f8f" stroke-width="1.200" fill="none"/></svg>
<span class="t" style="left:52.00px;top:515.28px;font-size:9.5px;color:#474747;letter-spacing:-0.072px;">e-field (f=10;z=5) [1]</span>
<svg class="a" style="left:15.5px;top:529.4px" width="10.6" height="11" viewBox="0 0 10.6 11"><rect x=".6" y=".8" width="8.800" height="8.600" fill="#fff" stroke="#6a6a6a" stroke-width="1"/><path d="M1.300 3.200l2.200 2.200 2-1.800 3.400-1.800" stroke="#2b79ad" stroke-width="1.100" fill="none"/><path d="M1.300 8.200l3-2.600 4.600 3" stroke="#8a8a8a" stroke-width=".7" fill="none"/></svg>
<span class="t" style="left:30.80px;top:528.60px;font-size:9.5px;color:#474747;transform:scaleX(0.9333);transform-origin:0 50%;">Farfields</span>
<svg class="a" style="left:15.5px;top:542.7px" width="10.6" height="11" viewBox="0 0 10.6 11"><rect x=".6" y=".8" width="8.800" height="8.600" fill="#fff" stroke="#6a6a6a" stroke-width="1"/><path d="M1.300 3.200l2.200 2.200 2-1.800 3.400-1.800" stroke="#2b79ad" stroke-width="1.100" fill="none"/><path d="M1.300 8.200l3-2.600 4.600 3" stroke="#8a8a8a" stroke-width=".7" fill="none"/></svg>
<span class="t" style="left:30.80px;top:541.92px;font-size:9.5px;color:#474747;transform:scaleX(0.9650);transform-origin:0 50%;">Tables</span>
<div class="a" style="left:181.8px;top:112.2px;width:85.8px;height:17px;background:#ffffff;border:1px solid #d9d9d9;border-bottom:none;box-sizing:border-box;"></div>
<div class="a" style="left:178px;top:129px;width:900.3px;height:1.2px;background:#dadada;"></div>
<svg class="a" style="left:188.8px;top:115.3px" width="11.6" height="10.6" viewBox="0 0 11.6 10.6"><rect width="11.600" height="10.600" rx=".6" fill="#0d8c7f"/><path d="M2.200 4.200c1.200-1.200 2.400-1.200 3.600 0s2.400 1.200 3.600 0M2.200 6.800c1.200-1.200 2.400-1.200 3.600 0s2.400 1.200 3.600 0" stroke="#d8f3ef" stroke-width=".9" fill="none"/></svg>
<span class="t" style="left:203.60px;top:116.03px;font-size:9.3px;color:#333;transform:scaleX(0.9012);transform-origin:0 50%;">Untitled_0*</span>
<svg class="a" style="left:248.8px;top:116.2px" width="9.8" height="9.6" viewBox="0 0 9.8 9.6"><rect width="9.800" height="9.600" rx="1.200" fill="#e0694a"/><path d="M2.900 2.800l4 4M6.900 2.800l-4 4" stroke="#fff" stroke-width="1.500"/></svg>
<div class="a" style="left:182.5px;top:131.5px;width:894.2px;height:303.4px;background:#c3c3c3;"></div>
<svg class="a cl" style="left:184.0px;top:133.0px" width="892.0" height="300.3" viewBox="0 0 892.0 300.3"><defs><linearGradient id="vg" x1="0" y1="0" x2="0" y2="1"><stop offset="0" stop-color="#a2a6b8"/><stop offset=".5" stop-color="#cfd1da"/><stop offset="1" stop-color="#ffffff"/></linearGradient></defs>
<rect width="892.0" height="300.3" fill="url(#vg)"/>
<path d="M-80.7 114.5L490.9 590.7M-61.9 98.9L509.0 573.2M-43.1 83.5L527.0 555.9M-24.4 68.1L544.9 538.6M-5.9 52.8L562.7 521.4M12.6 37.6L580.4 504.3M31.0 22.5L598.0 487.3M49.3 7.5L615.6 470.3M67.4 -7.5L633.0 453.5M85.5 -22.4L650.3 436.8M103.5 -37.2L667.6 420.1M121.4 -52.0L684.8 403.5M139.3 -66.6L701.8 387.1M157.0 -81.2L718.8 370.7M174.6 -95.8L735.7 354.4M192.2 -110.2L752.5 338.2M209.6 -124.6L769.2 322.0M227.0 -138.9L785.8 306.0M244.3 -153.1L802.4 290.0M261.5 -167.3L818.8 274.1M278.6 -181.4L835.2 258.3M295.7 -195.4L851.5 242.6M312.6 -209.4L867.7 227.0M329.5 -223.3L883.8 211.4M346.3 -237.1L899.8 195.9M363.0 -250.8L915.8 180.5M379.6 -264.5L931.7 165.2M396.1 -278.1L947.5 150.0M412.6 -291.7L963.2 134.8M-80.7 114.5L412.6 -291.7M-61.1 130.8L431.5 -277.0M-41.4 147.2L450.5 -262.3M-21.7 163.6L469.6 -247.5M-1.9 180.1L488.7 -232.7M17.9 196.6L507.8 -217.9M37.8 213.2L527.0 -203.0M57.8 229.8L546.3 -188.1M77.8 246.5L565.6 -173.2M97.9 263.3L584.9 -158.2M118.0 280.0L604.3 -143.1M138.2 296.9L623.8 -128.1M158.4 313.7L643.3 -112.9M178.8 330.7L662.9 -97.8M219.6 364.7L702.2 -67.3M240.1 381.7L722.0 -52.0M260.6 398.9L741.8 -36.7M281.2 416.0L761.6 -21.3M301.9 433.3L781.5 -5.9M322.7 450.6L801.5 9.5M343.5 467.9L821.5 25.0M364.3 485.3L841.6 40.6M385.3 502.7L861.7 56.2M406.3 520.2L881.9 71.8M427.3 537.8L902.1 87.5M448.4 555.4L922.4 103.2M469.6 573.0L942.8 119.0M490.9 590.7L963.2 134.8" stroke="#626262" stroke-width="1.080" fill="none" stroke-opacity=".6"/>
<path d="M199.1 347.6L682.5 -82.6" stroke="#5a5a5a" stroke-width="1.600" fill="none" stroke-opacity=".8"/>
<path d="M506.3 164.8L667.5 299.6" stroke="#5c5c5c" stroke-width="1.500" stroke-opacity=".75"/>
<!-- structure -->
<path d="M472.0 143.5l22.700 17.100-22.700 14.400z" fill="#1fd21f"/><path d="M472.0 175.0l22.700-14.400-22.700 24.400z" fill="#158a15"/>
<path d="M472.0 127.5L510.5 156.60000000000002L483.1 254.7L472.0 264.2M472.0 248.3L483.1 254.7" stroke="#2a2a2a" stroke-width=".65" fill="none"/>
<!-- gizmo -->
<g>
<circle cx="853.0" cy="234.7" r="7" fill="#fff" opacity=".6"/><circle cx="871.5" cy="234.3" r="7" fill="#fff" opacity=".6"/><circle cx="875.0" cy="278.0" r="7" fill="#fff" opacity=".6"/>
<path d="M846.5 255.2L865.0 269.4" stroke="#d63a3a" stroke-width="3.200"/><path d="M870.0 273.3l-8-1.300 4.300-5.600z" fill="#d84a4a"/>
<path d="M847.5 255.7L862.5 243.2" stroke="#2a9a3a" stroke-width="3.200"/><path d="M867.3 239.10000000000002l-3.200 7.300-4.500-5.400z" fill="#2fa840"/>
<path d="M848.8 255.7L850.3 244.5" stroke="#2a2f9a" stroke-width="3.800"/><path d="M851.0 238.8l2.700 5.800-6.400-.4z" fill="#9a9fe0"/>
<text x="853.0" y="238.3" font-family="Liberation Sans, sans-serif" font-weight="bold" font-size="13" text-anchor="middle" fill="#1d1de0">z</text>
<text x="871.5999999999999" y="237.3" font-family="Liberation Sans, sans-serif" font-weight="bold" font-size="13" text-anchor="middle" fill="#1e9a2e">y</text>
<text x="874.8" y="281.5" font-family="Liberation Sans, sans-serif" font-weight="bold" font-size="13" text-anchor="middle" fill="#e01d1d">x</text>
</g></svg>
<div class="a" style="left:181.2px;top:434.3px;width:896.8px;height:12px;background:#ffffff;"></div>
<div class="a" style="left:181.2px;top:445px;width:69.8px;height:1.5px;background:#2b6a9c;"></div>
<span class="t" style="left:210.69px;top:435.52px;font-size:8.3px;color:#333;">3D</span>
<span class="t" style="left:266.90px;top:435.52px;font-size:8.3px;color:#333;letter-spacing:-0.144px;">Schematic</span>
<div class="a" style="left:321px;top:436.5px;width:1px;height:8px;background:#b5b5b5;"></div>
<span class="t" style="left:329.60px;top:435.52px;font-size:8.3px;color:#333;">2D/3D Results</span>
<div class="a" style="left:181.2px;top:451.2px;width:446.8px;height:11px;background:#ffffff;"></div>
<span class="t" style="left:183.20px;top:453.22px;font-size:8.3px;color:#111;transform:scaleX(0.9277);transform-origin:0 50%;font-weight:bold;">Parameter List</span>
<div class="a" style="left:181.2px;top:462.3px;width:446.8px;height:82.2px;background:#ffffff;border:1px solid #bdbdbd;box-sizing:border-box;"></div>
<div class="a" style="left:182.2px;top:463.3px;width:444px;height:16.3px;background:#f7f7f7;"></div>
<div class="a" style="left:182.2px;top:479.4px;width:444px;height:1px;background:#e2e2e2;"></div>
<div class="a" style="left:182.2px;top:492.4px;width:444px;height:1px;background:#efefef;"></div>
<svg class="a" style="left:184.5px;top:466.2px" width="9" height="10" viewBox="0 0 9 10"><path d="M.7 .8h7.600l-3 3.800v4.600l-1.600-1.200v-3.400z" fill="#fff" stroke="#7a7a7a" stroke-width=".9"/></svg>
<span class="t" style="left:198.70px;top:467.33px;font-size:9.3px;color:#444;transform:scaleX(0.9473);transform-origin:0 50%;">Name</span>
<span class="t" style="left:305.80px;top:467.33px;font-size:9.3px;color:#444;transform:scaleX(0.9216);transform-origin:0 50%;">Expression</span>
<span class="t" style="left:218.10px;top:482.92px;font-size:8.3px;color:#b4b4b4;letter-spacing:0.182px;">&lt;new parameter&gt;</span>
<div class="a" style="left:181.2px;top:544.5px;width:70.2px;height:15.2px;background:#ffffff;border-left:1px solid #d4d4d4;border-right:1px solid #d4d4d4;box-sizing:border-box;"></div>
<div class="a" style="left:181.2px;top:558.5px;width:70.2px;height:1.5px;background:#2b6a9c;"></div>
<span class="t" style="left:189.40px;top:549.12px;font-size:8.3px;color:#333;letter-spacing:-0.021px;">Parameter List</span>
<span class="t" style="left:260.40px;top:548.72px;font-size:8.3px;color:#222;letter-spacing:-0.030px;text-shadow:0.200px 0 0 #333;">Result Navigator</span>
<div class="a" style="left:329.8px;top:548px;width:1px;height:9px;background:#b5b5b5;"></div>
<div class="a" style="left:631.6px;top:451.2px;width:446.4px;height:11.5px;background:#ffffff;"></div>
<span class="t" style="left:634.50px;top:453.42px;font-size:8.3px;color:#111;transform:scaleX(0.9022);transform-origin:0 50%;font-weight:bold;">Messages</span>
<svg class="a" style="left:1069px;top:453px" width="9" height="9" viewBox="0 0 9 9"><path d="M1.800 1.800l5 5M6.800 1.800l-5 5" stroke="#222" stroke-width="1.400"/></svg>
<svg class="a" style="left:650px;top:463px" width="62" height="13" viewBox="0 0 62 13"><path d="M10.500 2.500l4.500 8h-9z" fill="#e6e6e6" stroke="#b0b0b0" stroke-width=".8"/><path d="M10.500 5v3M10.500 9v.8" stroke="#9a9a9a" stroke-width="1"/>
<rect x="22.800" y=".6" width="12.800" height="12" fill="#fafafa" stroke="#bdbdbd" stroke-width=".8"/><circle cx="29.200" cy="6.500" r="4" fill="#fff" stroke="#6a6a8a" stroke-width=".8"/><path d="M29.200 5.800v3M29.200 4v.9" stroke="#2a3fb0" stroke-width="1.300"/>
<path d="M48.800 2.200l3.600 3.600M52.400 2.200l-3.600 3.600" stroke="#d21f1f" stroke-width="1.300"/><path d="M53.500 3.200h4.500M52 5.800h6M49 8.300h9" stroke="#333" stroke-width="1.200"/></svg>
<div class="a" style="left:631.8px;top:476.5px;width:446.2px;height:68px;background:#ffffff;border:1px solid #bdbdbd;border-left:1.400px solid #a4a4a4;box-sizing:border-box;"></div>
<div class="a" style="left:647px;top:483px;width:415.2px;height:1px;background:#dedede;"></div>
<div class="a" style="left:647px;top:509.3px;width:415.2px;height:1px;background:#dedede;"></div>
<div class="a" style="left:647px;top:525.3px;width:415.2px;height:1px;background:#dedede;"></div>
<span class="t" style="left:649.00px;top:487.02px;font-size:8.3px;color:#4a4a4a;letter-spacing:-0.012px;">The Z and Y matrices have been successfully calculated.</span>
<span class="t" style="left:649.00px;top:498.02px;font-size:8.3px;color:#4a4a4a;letter-spacing:-0.055px;">The VSWR results have been successfully calculated.</span>
<span class="t" style="left:649.20px;top:514.02px;font-size:8.3px;color:#4a4a4a;letter-spacing:-0.030px;">Successfully finished Secondary Quantity Evaluation.</span>
<span class="t" style="left:649.20px;top:529.22px;font-size:8.3px;color:#4a4a4a;letter-spacing:-0.030px;">Successfully finished Secondary Quantity Evaluation.</span>
<svg class="a" style="left:636.3px;top:512.6px" width="10" height="10" viewBox="0 0 10 10"><circle cx="5" cy="5" r="4.200" fill="#fff" stroke="#7a7a8a" stroke-width=".8"/><path d="M5 4.300v3M5 2.500v.9" stroke="#2a3fb0" stroke-width="1.300"/></svg>
<svg class="a" style="left:636.3px;top:528.3px" width="10" height="10" viewBox="0 0 10 10"><circle cx="5" cy="5" r="4.200" fill="#fff" stroke="#7a7a8a" stroke-width=".8"/><path d="M5 4.300v3M5 2.500v.9" stroke="#2a3fb0" stroke-width="1.300"/></svg>
<div class="a" style="left:1065.5px;top:477.5px;width:11.6px;height:66px;background:#e9e9e9;"></div>
<div class="a" style="left:1065.5px;top:478.3px;width:11.6px;height:11.7px;background:#f4f4f4;border:1px solid #cfcfcf;box-sizing:border-box;"></div>
<div class="a" style="left:1065.5px;top:519.7px;width:11.6px;height:11.6px;background:#f4f4f4;border:1px solid #cfcfcf;box-sizing:border-box;"></div>
<div class="a" style="left:1065.5px;top:531.3px;width:11.6px;height:11.9px;background:#f4f4f4;border:1px solid #cfcfcf;box-sizing:border-box;"></div>
<svg class="a" style="left:1065.5px;top:478px" width="12" height="66" viewBox="0 0 12 66"><path d="M3.400 7.500l2.400-2.600 2.400 2.600z" fill="#666"/><path d="M3.400 58l2.400 2.600 2.400-2.600z" fill="#666"/></svg>
<div class="a" style="left:631.6px;top:544.5px;width:52.4px;height:15.2px;background:#ffffff;border-left:1px solid #d4d4d4;border-right:1px solid #d4d4d4;box-sizing:border-box;"></div>
<div class="a" style="left:631.6px;top:558.5px;width:52.4px;height:1.5px;background:#2b6a9c;"></div>
<span class="t" style="left:640.70px;top:549.12px;font-size:8.3px;color:#333;transform:scaleX(0.9199);transform-origin:0 50%;">Messages</span>
<span class="t" style="left:693.60px;top:548.72px;font-size:8.3px;color:#222;transform:scaleX(0.9454);transform-origin:0 50%;text-shadow:0.200px 0 0 #333;">Progress</span>
<div class="a" style="left:733.6px;top:548px;width:1px;height:9px;background:#b5b5b5;"></div>
<span class="t" style="left:5.60px;top:565.73px;font-size:7.6px;color:#3a3a3a;">Ready</span>
<span class="t" style="left:843.90px;top:565.53px;font-size:7.6px;color:#3a3a3a;letter-spacing:-0.081px;">Raster=20.000</span>
<span class="t" style="left:903.80px;top:565.53px;font-size:7.6px;color:#3a3a3a;letter-spacing:-0.069px;">Meshcells=227,520</span>
<span class="t" style="left:980.00px;top:565.53px;font-size:7.6px;color:#3a3a3a;letter-spacing:0.061px;">Normal</span>
<span class="t" style="left:1016.20px;top:565.53px;font-size:7.6px;color:#3a3a3a;transform:scaleX(0.8770);transform-origin:0 50%;letter-spacing:-0.12px;">mm</span>
<span class="t" style="left:1033.70px;top:565.53px;font-size:7.6px;color:#3a3a3a;transform:scaleX(0.8824);transform-origin:0 50%;letter-spacing:-0.12px;">GHz</span>
<span class="t" style="left:1051.80px;top:565.53px;font-size:7.6px;color:#3a3a3a;transform:scaleX(0.9094);transform-origin:0 50%;">ns</span>
<span class="t" style="left:1064.20px;top:565.53px;font-size:7.6px;color:#3a3a3a;transform:scaleX(0.8325);transform-origin:0 50%;letter-spacing:-0.12px;">°C</span>
<div class="a" style="left:898px;top:564.5px;width:1px;height:10px;background:#cfcfcf;"></div>
<div class="a" style="left:974.3px;top:564.5px;width:1px;height:10px;background:#cfcfcf;"></div>
<div class="a" style="left:1010.5px;top:564.5px;width:1px;height:10px;background:#cfcfcf;"></div>
<div class="a" style="left:745.7px;top:564.5px;width:1px;height:10px;background:#cfcfcf;"></div>
<div class="a" style="left:817px;top:564.5px;width:1px;height:10px;background:#cfcfcf;"></div>
<svg class="a" style="left:650px;top:562px" width="192" height="14" viewBox="0 0 192 14"><g transform="translate(10 7.200) scale(.860) translate(-10 -7)"><rect x="2.300" y=".8" width="15.500" height="12.600" fill="#e3ebf3" stroke="#8aa0b5" stroke-width=".8"/></g>
<g transform="translate(10 7.200) scale(.860) translate(-10 -7)"><circle cx="11.800" cy="5.300" r="2.900" fill="#fff" stroke="#3a5f86" stroke-width="1.100"/><path d="M9.800 7.500l-4.300 4.300" stroke="#3a5f86" stroke-width="1.700"/></g>
<g transform="translate(28 7.200) scale(.860) translate(-28 -7)"><path d="M28 2.500v9M23.500 7h9M28 1.500l-1.800 2.200h3.600zM28 12.500l-1.800-2.200h3.600zM22.500 7l2.200-1.800v3.600zM33.500 7l-2.200-1.800v3.600z" stroke="#245a8c" stroke-width="1.300" fill="#245a8c"/></g>
<g transform="translate(48 7.200) scale(.860) translate(-48 -7)"><path d="M50 4.500a4.200 4.200 0 1 0 .8 4.300" stroke="#245a8c" stroke-width="1.900" fill="none"/><path d="M51.500 1.500v4.500h-4.500z" fill="#245a8c"/></g>
<g transform="translate(65 7.200) scale(.860) translate(-65 -7)"><circle cx="66.500" cy="5.800" r="3" fill="#fff" stroke="#3a5f86" stroke-width="1.100"/><path d="M64.500 8l-3 4" stroke="#3a5f86" stroke-width="1.600"/><path d="M60.300 1.500v6" stroke="#3a5f86" stroke-width="1"/></g>
<g transform="translate(83 7.200) scale(.860) translate(-83 -7)"><path d="M83 2.500v9M79.500 7h7M83 1l-2 2.300h4zM83 13l-2-2.300h4z" stroke="#245a8c" stroke-width="1.200" fill="#245a8c"/><ellipse cx="83" cy="7" rx="4.200" ry="1.700" fill="none" stroke="#245a8c" stroke-width="1"/></g>
<g transform="translate(109 7.200) scale(.860) translate(-109 -7)"><circle cx="110" cy="5.500" r="3" fill="#fff" stroke="#555" stroke-width="1.100"/><path d="M108 7.800l-3.700 4" stroke="#555" stroke-width="1.700"/></g>
<g transform="translate(127.5 7.200) scale(.860) translate(-127.5 -7)"><path d="M123.500 3.500l3.500-1.300v9l-3.500 1.300zM128 2.200l3.500 1.300v9l-3.500-1.300z" fill="#3a6f9f" stroke="#244a6c" stroke-width=".6"/></g>
<g transform="translate(152 7.200) scale(.860) translate(-152 -7)"><path d="M147 4l4-2 4 2v5.500l-4 2-4-2zM147 4l4 2 4-2M151 6v5.500" fill="none" stroke="#666" stroke-width=".8"/><path d="M157.500 11.500h1.300" stroke="#555" stroke-width="1"/></g>
<g transform="translate(180 7.200) scale(.860) translate(-180 -7)"><rect x="175.500" y="2.500" width="8.500" height="8" fill="#fff" stroke="#555" stroke-width=".9"/><path d="M175.500 5h8.500M178.300 2.500v8" stroke="#555" stroke-width=".6"/><circle cx="184.300" cy="10.300" r="2.400" fill="#2b79ad"/></g></svg>
<div class="a" style="left:355.5px;top:113.5px;width:297.70000000000005px;height:400.1px;background:#f0f0f0;"></div>
<div class="a" style="left:355.5px;top:113.5px;width:297.70000000000005px;height:17.3px;background:#ffffff;"></div>
<div class="a" style="left:380.3px;top:113.5px;width:4.6px;height:1.1px;background:#8e8e8e;"></div>
<div class="a" style="left:428.8px;top:113.5px;width:4.6px;height:1.1px;background:#8e8e8e;"></div>
<span class="t" style="left:359.50px;top:116.36px;font-size:8.4px;color:#111;letter-spacing:0.098px;">Monitor</span>
<svg class="a" style="left:639.5px;top:117.5px" width="8" height="8" viewBox="0 0 8 8"><path d="M.6 .6l6.800 6.800M7.400 .6l-6.800 6.800" stroke="#222" stroke-width=".9"/></svg>
<div class="a" style="left:361.8px;top:142.2px;width:228.40000000000003px;height:93.4px;border:1px solid #dcdcdc;box-sizing:border-box;"></div>
<div class="a" style="left:366px;top:139.2px;width:19.0px;height:7px;background:#f0f0f0;"></div>
<span class="t" style="left:367.50px;top:137.25px;font-size:7.9px;color:#000000;transform:scaleX(0.9050);transform-origin:0 50%;">Type</span>
<div class="a" style="left:361.8px;top:246.2px;width:228.40000000000003px;height:28.600000000000023px;border:1px solid #dcdcdc;box-sizing:border-box;"></div>
<div class="a" style="left:366px;top:243.2px;width:20.5px;height:7px;background:#f0f0f0;"></div>
<span class="t" style="left:367.50px;top:241.25px;font-size:7.9px;color:#000000;transform:scaleX(0.9018);transform-origin:0 50%;letter-spacing:-0.12px;">Label</span>
<div class="a" style="left:361.8px;top:285.2px;width:228.40000000000003px;height:79.40000000000003px;border:1px solid #dcdcdc;box-sizing:border-box;"></div>
<div class="a" style="left:366px;top:282.2px;width:46.5px;height:7px;background:#f0f0f0;"></div>
<span class="t" style="left:367.50px;top:280.25px;font-size:7.9px;color:#000000;transform:scaleX(0.9600);transform-origin:0 50%;">Specification</span>
<div class="rd" style="left:368.5px;top:151.5px"><i></i></div>
<span class="t" style="left:379.80px;top:150.95px;font-size:7.9px;color:#000000;transform:scaleX(0.8764);transform-origin:0 50%;letter-spacing:-0.12px;">E-Field</span>
<div class="rd" style="left:368.5px;top:165.1px"></div>
<span class="t" style="left:379.80px;top:164.50px;font-size:7.9px;color:#000000;transform:scaleX(0.9336);transform-origin:0 50%;">H-Field and Surface current</span>
<div class="rd" style="left:368.5px;top:178.6px"></div>
<span class="t" style="left:379.80px;top:178.05px;font-size:7.9px;color:#000000;transform:scaleX(0.8930);transform-origin:0 50%;letter-spacing:-0.12px;">Farfield/RCS</span>
<div class="rd" style="left:368.5px;top:192.2px"></div>
<span class="t" style="left:379.80px;top:191.60px;font-size:7.9px;color:#000000;transform:scaleX(0.9063);transform-origin:0 50%;">Field source</span>
<div class="rd" style="left:479.0px;top:151.5px"></div>
<span class="t" style="left:491.20px;top:150.95px;font-size:7.9px;color:#000000;transform:scaleX(0.9611);transform-origin:0 50%;">Surface current (TLM only)</span>
<div class="rd" style="left:479.0px;top:165.1px"></div>
<span class="t" style="left:491.20px;top:164.50px;font-size:7.9px;color:#000000;letter-spacing:-0.126px;">Power flow</span>
<div class="rd" style="left:479.0px;top:178.6px"></div>
<span class="t" style="left:491.20px;top:178.05px;font-size:7.9px;color:#000000;transform:scaleX(0.9483);transform-origin:0 50%;">Current density</span>
<div class="rd" style="left:479.0px;top:192.2px"></div>
<span class="t" style="left:491.20px;top:191.60px;font-size:7.9px;color:#000000;transform:scaleX(0.9229);transform-origin:0 50%;">Power loss density/SAR</span>
<div class="rd" style="left:479.0px;top:205.7px"></div>
<span class="t" style="left:491.20px;top:205.15px;font-size:7.9px;color:#000000;transform:scaleX(0.9424);transform-origin:0 50%;">Electric energy density</span>
<div class="rd" style="left:479.0px;top:219.2px"></div>
<span class="t" style="left:491.20px;top:218.70px;font-size:7.9px;color:#000000;transform:scaleX(0.9529);transform-origin:0 50%;">Magnetic energy density</span>
<div class="a" style="left:595px;top:142.3px;width:50.2px;height:13.3px;background:#e1e1e1;border:1.500px solid #0078d7;box-sizing:border-box;"></div>
<span class="t" style="left:615.35px;top:144.35px;font-size:7.9px;color:#000000;transform:scaleX(0.8411);transform-origin:0 50%;letter-spacing:-0.12px;">OK</span>
<div class="a" style="left:595px;top:162.28px;width:50.2px;height:13px;background:#e1e1e1;border:1px solid #adadad;box-sizing:border-box;"></div>
<span class="t" style="left:609.10px;top:164.33px;font-size:7.9px;color:#000000;transform:scaleX(0.9170);transform-origin:0 50%;letter-spacing:-0.12px;">Cancel</span>
<div class="a" style="left:595px;top:182.26000000000002px;width:50.2px;height:13px;background:#e1e1e1;border:1px solid #adadad;box-sizing:border-box;"></div>
<span class="t" style="left:610.85px;top:184.31px;font-size:7.9px;color:#000000;transform:scaleX(0.9361);transform-origin:0 50%;">Apply</span>
<div class="a" style="left:595px;top:202.24px;width:50.2px;height:13px;background:#e1e1e1;border:1px solid #adadad;box-sizing:border-box;"></div>
<span class="t" style="left:606.85px;top:204.29px;font-size:7.9px;color:#000000;transform:scaleX(0.9431);transform-origin:0 50%;">Preview</span>
<div class="a" style="left:595px;top:222.22000000000003px;width:50.2px;height:13px;background:#e1e1e1;border:1px solid #adadad;box-sizing:border-box;"></div>
<span class="t" style="left:612.85px;top:224.27px;font-size:7.9px;color:#000000;transform:scaleX(0.9126);transform-origin:0 50%;letter-spacing:-0.12px;">Help</span>
<span class="t" style="left:368.50px;top:256.35px;font-size:7.9px;color:#000000;transform:scaleX(0.9326);transform-origin:0 50%;">Name:</span>
<div class="a" style="left:397.1px;top:254.3px;width:129.8px;height:12.2px;background:#e6e6e6;border:1px solid #a6a6a6;box-sizing:border-box;"></div>
<span class="t" style="left:399.60px;top:256.45px;font-size:7.9px;color:#000000;letter-spacing:0.033px;">e-field (f=10)</span>
<div class="a" style="left:532px;top:256.5px;width:8.6px;height:8.4px;background:#ffffff;border:.900px solid #4a4a4a;box-sizing:border-box;"></div>
<svg class="a" style="left:532px;top:256.5px" width="9" height="9" viewBox="0 0 9 9"><path d="M2 4.300l1.900 1.900 3-3.700" stroke="#222" stroke-width="1" fill="none"/></svg>
<span class="t" style="left:543.80px;top:256.25px;font-size:7.9px;color:#000000;transform:scaleX(0.9565);transform-origin:0 50%;">Automatic</span>
<div class="rd" style="left:368.9px;top:293.8px"><i></i></div>
<span class="t" style="left:380.80px;top:293.25px;font-size:7.9px;color:#000000;transform:scaleX(0.9243);transform-origin:0 50%;">Frequency</span>
<div class="rd" style="left:477.9px;top:293.8px"></div>
<span class="t" style="left:490.70px;top:293.25px;font-size:7.9px;color:#000000;transform:scaleX(0.9052);transform-origin:0 50%;letter-spacing:-0.12px;">Time</span>
<div class="a" style="left:369px;top:309.1px;width:102.8px;height:16.2px;background:#e1e1e1;border:1px solid #adadad;box-sizing:border-box;"></div>
<span class="t" style="left:371.70px;top:312.95px;font-size:7.9px;color:#000000;letter-spacing:-0.026px;">Frequency list (f0; f1;...)</span>
<svg class="a" style="left:462.5px;top:314.5px" width="8" height="6" viewBox="0 0 8 6"><path d="M1.300 1.500l2.600 2.600 2.600-2.600" stroke="#444" stroke-width=".9" fill="none"/></svg>
<div class="a" style="left:478.2px;top:309.1px;width:103.3px;height:12.3px;background:#ffffff;border:1px solid #7a7a7a;box-sizing:border-box;"></div>
<span class="t" style="left:480.30px;top:311.55px;font-size:7.9px;color:#000000;">10</span>
<span class="t" style="left:369.00px;top:329.75px;font-size:7.9px;color:#000000;transform:scaleX(0.9328);transform-origin:0 50%;">Frequency minimum:</span>
<div class="a" style="left:478.2px;top:326.8px;width:103.3px;height:12.7px;background:#e6e6e6;border:1px solid #a6a6a6;box-sizing:border-box;"></div>
<span class="t" style="left:480.30px;top:329.25px;font-size:7.9px;color:#000000;">9</span>
<span class="t" style="left:369.00px;top:347.15px;font-size:7.9px;color:#000000;transform:scaleX(0.9243);transform-origin:0 50%;">Frequency maximum:</span>
<div class="a" style="left:478.2px;top:344.8px;width:103.3px;height:12.5px;background:#e6e6e6;border:1px solid #a6a6a6;box-sizing:border-box;"></div>
<span class="t" style="left:480.30px;top:347.15px;font-size:7.9px;color:#000000;">11</span>
<div class="a" style="left:368.5px;top:371.6px;width:8px;height:8px;background:#ffffff;border:.900px solid #4a4a4a;box-sizing:border-box;"></div>
<span class="t" style="left:379.80px;top:371.75px;font-size:7.9px;color:#000000;transform:scaleX(0.9037);transform-origin:0 50%;">Use Subvolume</span>
<span class="t" style="left:368.50px;top:384.45px;font-size:7.9px;color:#868686;transform:scaleX(0.9198);transform-origin:0 50%;">Coordinates:</span>
<span class="t" style="left:478.60px;top:384.45px;font-size:7.9px;color:#868686;transform:scaleX(0.9130);transform-origin:0 50%;letter-spacing:-0.12px;">2D Plane:</span>
<div class="a" style="left:368.2px;top:396.7px;width:103.5px;height:16.2px;background:#cccccc;"></div>
<span class="t" style="left:371.10px;top:400.55px;font-size:7.9px;color:#7d7d7d;letter-spacing:-0.095px;">Structure bounding box</span>
<svg class="a" style="left:462px;top:402px" width="8" height="6" viewBox="0 0 8 6"><path d="M1.300 1.500l2.600 2.600 2.600-2.600" stroke="#b3b3b3" stroke-width=".9" fill="none"/></svg>
<div class="a" style="left:477.9px;top:396.7px;width:103.2px;height:16.2px;background:#cccccc;"></div>
<span class="t" style="left:480.90px;top:400.55px;font-size:7.9px;color:#7d7d7d;transform:scaleX(0.9160);transform-origin:0 50%;">None</span>
<svg class="a" style="left:571.5px;top:402px" width="8" height="6" viewBox="0 0 8 6"><path d="M1.300 1.500l2.600 2.600 2.600-2.600" stroke="#b3b3b3" stroke-width=".9" fill="none"/></svg>
<span class="t" style="left:368.20px;top:420.65px;font-size:7.9px;color:#868686;transform:scaleX(0.9067);transform-origin:0 50%;">X Min:</span>
<div class="a di" style="left:393.3px;top:419.4px;width:35.2px;height:11.800px;"><span style="position:absolute;right:1.800px;top:0.25px;font-size:7.9px;color:#8c8c8c;white-space:nowrap;letter-spacing:-.05px">31912226</span></div>
<span class="t" style="left:432.00px;top:420.65px;font-size:7.9px;color:#868686;">+</span>
<div class="a di" style="left:441.3px;top:419.4px;width:30.0px;height:11.800px;"><span style="position:absolute;left:2.600px;top:0.25px;font-size:7.9px;color:#8c8c8c;white-space:nowrap;letter-spacing:-.05px">0.0</span></div>
<span class="t" style="left:478.20px;top:420.65px;font-size:7.9px;color:#868686;transform:scaleX(0.8547);transform-origin:0 50%;letter-spacing:-0.12px;">X Max:</span>
<div class="a di" style="left:504.2px;top:419.4px;width:35.3px;height:11.800px;"><span style="position:absolute;right:1.800px;top:0.25px;font-size:7.9px;color:#8c8c8c;white-space:nowrap;letter-spacing:-.05px">31912226</span></div>
<span class="t" style="left:543.20px;top:420.65px;font-size:7.9px;color:#868686;">-</span>
<div class="a di" style="left:553.4px;top:419.4px;width:30.3px;height:11.800px;"><span style="position:absolute;left:2.600px;top:0.25px;font-size:7.9px;color:#8c8c8c;white-space:nowrap;letter-spacing:-.05px">0.0</span></div>
<span class="t" style="left:368.20px;top:438.55px;font-size:7.9px;color:#868686;transform:scaleX(0.9125);transform-origin:0 50%;">Y Min:</span>
<div class="a di" style="left:393.3px;top:437.3px;width:35.2px;height:11.800px;"><span style="position:absolute;right:1.800px;top:0.25px;font-size:7.9px;color:#8c8c8c;white-space:nowrap;letter-spacing:-.05px">37760049</span></div>
<span class="t" style="left:432.00px;top:438.55px;font-size:7.9px;color:#868686;">+</span>
<div class="a di" style="left:441.3px;top:437.3px;width:30.0px;height:11.800px;"><span style="position:absolute;left:2.600px;top:0.25px;font-size:7.9px;color:#8c8c8c;white-space:nowrap;letter-spacing:-.05px">0.0</span></div>
<span class="t" style="left:478.20px;top:438.55px;font-size:7.9px;color:#868686;transform:scaleX(0.8637);transform-origin:0 50%;letter-spacing:-0.12px;">Y Max</span>
<div class="a di" style="left:504.2px;top:437.3px;width:35.3px;height:11.800px;"><span style="position:absolute;right:1.800px;top:0.25px;font-size:7.9px;color:#8c8c8c;white-space:nowrap;letter-spacing:-.05px">24191713</span></div>
<span class="t" style="left:543.20px;top:438.55px;font-size:7.9px;color:#868686;">-</span>
<div class="a di" style="left:553.4px;top:437.3px;width:30.3px;height:11.800px;"><span style="position:absolute;left:2.600px;top:0.25px;font-size:7.9px;color:#8c8c8c;white-space:nowrap;letter-spacing:-.05px">0.0</span></div>
<span class="t" style="left:368.20px;top:456.45px;font-size:7.9px;color:#868686;transform:scaleX(0.9250);transform-origin:0 50%;">Z Min:</span>
<div class="a di" style="left:393.3px;top:455.2px;width:35.2px;height:11.800px;"><span style="position:absolute;right:1.800px;top:0.25px;font-size:7.9px;color:#8c8c8c;white-space:nowrap;letter-spacing:-.05px">22668987</span></div>
<span class="t" style="left:432.00px;top:456.45px;font-size:7.9px;color:#868686;">+</span>
<div class="a di" style="left:441.3px;top:455.2px;width:30.0px;height:11.800px;"><span style="position:absolute;left:2.600px;top:0.25px;font-size:7.9px;color:#8c8c8c;white-space:nowrap;letter-spacing:-.05px">0.0</span></div>
<span class="t" style="left:478.20px;top:456.45px;font-size:7.9px;color:#868686;transform:scaleX(0.8709);transform-origin:0 50%;letter-spacing:-0.12px;">Z Max:</span>
<div class="a di" style="left:504.2px;top:455.2px;width:35.3px;height:11.800px;"><span style="position:absolute;left:2.600px;top:0.25px;font-size:7.9px;color:#8c8c8c;white-space:nowrap;letter-spacing:-.05px">0</span></div>
<span class="t" style="left:543.20px;top:456.45px;font-size:7.9px;color:#868686;">-</span>
<div class="a di" style="left:553.4px;top:455.2px;width:30.3px;height:11.800px;"><span style="position:absolute;left:2.600px;top:0.25px;font-size:7.9px;color:#8c8c8c;white-space:nowrap;letter-spacing:-.05px">0.0</span></div>
<div class="a" style="left:368.5px;top:474.4px;width:8px;height:8px;background:#f4f4f4;border:1px solid #c4c4c4;box-sizing:border-box;"></div>
<svg class="a" style="left:368.5px;top:474.4px" width="9" height="9" viewBox="0 0 9 9"><path d="M1.900 4.100l1.800 1.800 2.800-3.500" stroke="#b0b0b0" stroke-width=".9" fill="none"/></svg>
<span class="t" style="left:379.80px;top:473.75px;font-size:7.9px;color:#868686;transform:scaleX(0.9337);transform-origin:0 50%;">Use same offset in all directions</span>
<div class="a" style="left:368.5px;top:489.3px;width:8px;height:8px;background:#f6f6f6;border:1px solid #d0d0d0;box-sizing:border-box;"></div>
<span class="t" style="left:379.80px;top:488.95px;font-size:7.9px;color:#868686;letter-spacing:-0.032px;">Inflate volume with offset</span>
<svg class="a" style="left:646px;top:506px" width="7" height="7" viewBox="0 0 7 7"><g fill="#bdbdbd"><rect x="5" y="1" width="1" height="1"/><rect x="3" y="3" width="1" height="1"/><rect x="5" y="3" width="1" height="1"/><rect x="1" y="5" width="1" height="1"/><rect x="3" y="5" width="1" height="1"/><rect x="5" y="5" width="1" height="1"/></g></svg>
<div class="a" style="left:365.2px;top:137.6px;width:110px;height:39.8px;border:3px solid #0ca750;box-sizing:border-box;"></div>
<div class="a" style="left:472.2px;top:137.6px;width:119.1px;height:102.1px;border:3px solid #0ca750;box-sizing:border-box;"></div>
<svg class="a" style="left:525px;top:236px" width="105" height="26" viewBox="0 0 105 26"><path d="M8 3.700l83 13.600" stroke="#0ca750" stroke-width="3"/><path d="M97.300 18.300l-11.500 4.200 1.800-10.900z" fill="#0ca750"/></svg>
<span class="t cj" style="left:590.800px;top:256.600px;font-size:15.300px;line-height:22px;color:#18ad54;font-weight:500;letter-spacing:.1px">近场类型</span>
<div class="a" style="left:354.3px;top:369.5px;width:237px;height:131.6px;border:3.300px solid #0b6fbe;box-sizing:border-box;"></div>
<svg class="a" style="left:591px;top:422px" width="24" height="12" viewBox="0 0 24 12"><path d="M0 6.100h15" stroke="#4472c4" stroke-width="1.500"/><path d="M21.700 6.100l-8.200-4.200v8.400z" fill="#4472c4"/></svg>
<span class="t cj" style="left:620.600px;top:367.6px;font-size:14.600px;line-height:22px;color:#0c70c0;font-weight:500">设</span>
<span class="t cj" style="left:620.600px;top:386.7px;font-size:14.600px;line-height:22px;color:#0c70c0;font-weight:500">置</span>
<span class="t cj" style="left:620.600px;top:405.8px;font-size:14.600px;line-height:22px;color:#0c70c0;font-weight:500">近</span>
<span class="t cj" style="left:620.600px;top:424.9px;font-size:14.600px;line-height:22px;color:#0c70c0;font-weight:500">场</span>
<span class="t cj" style="left:620.600px;top:444.0px;font-size:14.600px;line-height:22px;color:#0c70c0;font-weight:500">区</span>
<span class="t cj" style="left:620.600px;top:463.1px;font-size:14.600px;line-height:22px;color:#0c70c0;font-weight:500">域</span>
<div class="a" style="left:352.6px;top:110.9px;width:303.7px;height:405.6px;border:3px solid #ff0000;box-sizing:border-box;"></div>
<div class="a" style="left:118px;top:398.4px;width:207.4px;height:22.6px;background:#fdfdfd;box-shadow:inset -3px -3px 3px -1px #adadad;"></div>
<svg class="a" style="left:121.5px;top:403.8px" width="14" height="12.5" viewBox="0 0 14 12.5"><rect x=".4" y=".4" width="13" height="10.800" rx=".8" fill="#cfd4d9" stroke="#8a9299" stroke-width=".7"/><rect x="1.600" y="1.600" width="10.600" height="7.400" fill="url(#gscr)"/><rect x="8.600" y="9.700" width="3" height=".8" fill="#555"/><rect x="1" y="11.600" width="12" height=".8" fill="#c4c4c4"/></svg>
<span class="t" style="left:145.70px;top:404.44px;font-size:12.5px;color:#505050;letter-spacing:0.018px;">New Field Monitor...</span>
<div class="a" style="left:115.2px;top:395.5px;width:213px;height:28.3px;border:3px solid #ff0000;box-sizing:border-box;"></div>
<svg class="a" style="left:215px;top:300px" width="140" height="100" viewBox="0 0 140 100"><path d="M8.300 95.700L124.500 12.300" stroke="#ff0000" stroke-width="2.800"/><path d="M129.300 8.900l-5.200 9.500-5-7z" fill="#ff0000"/></svg>
</body></html>
